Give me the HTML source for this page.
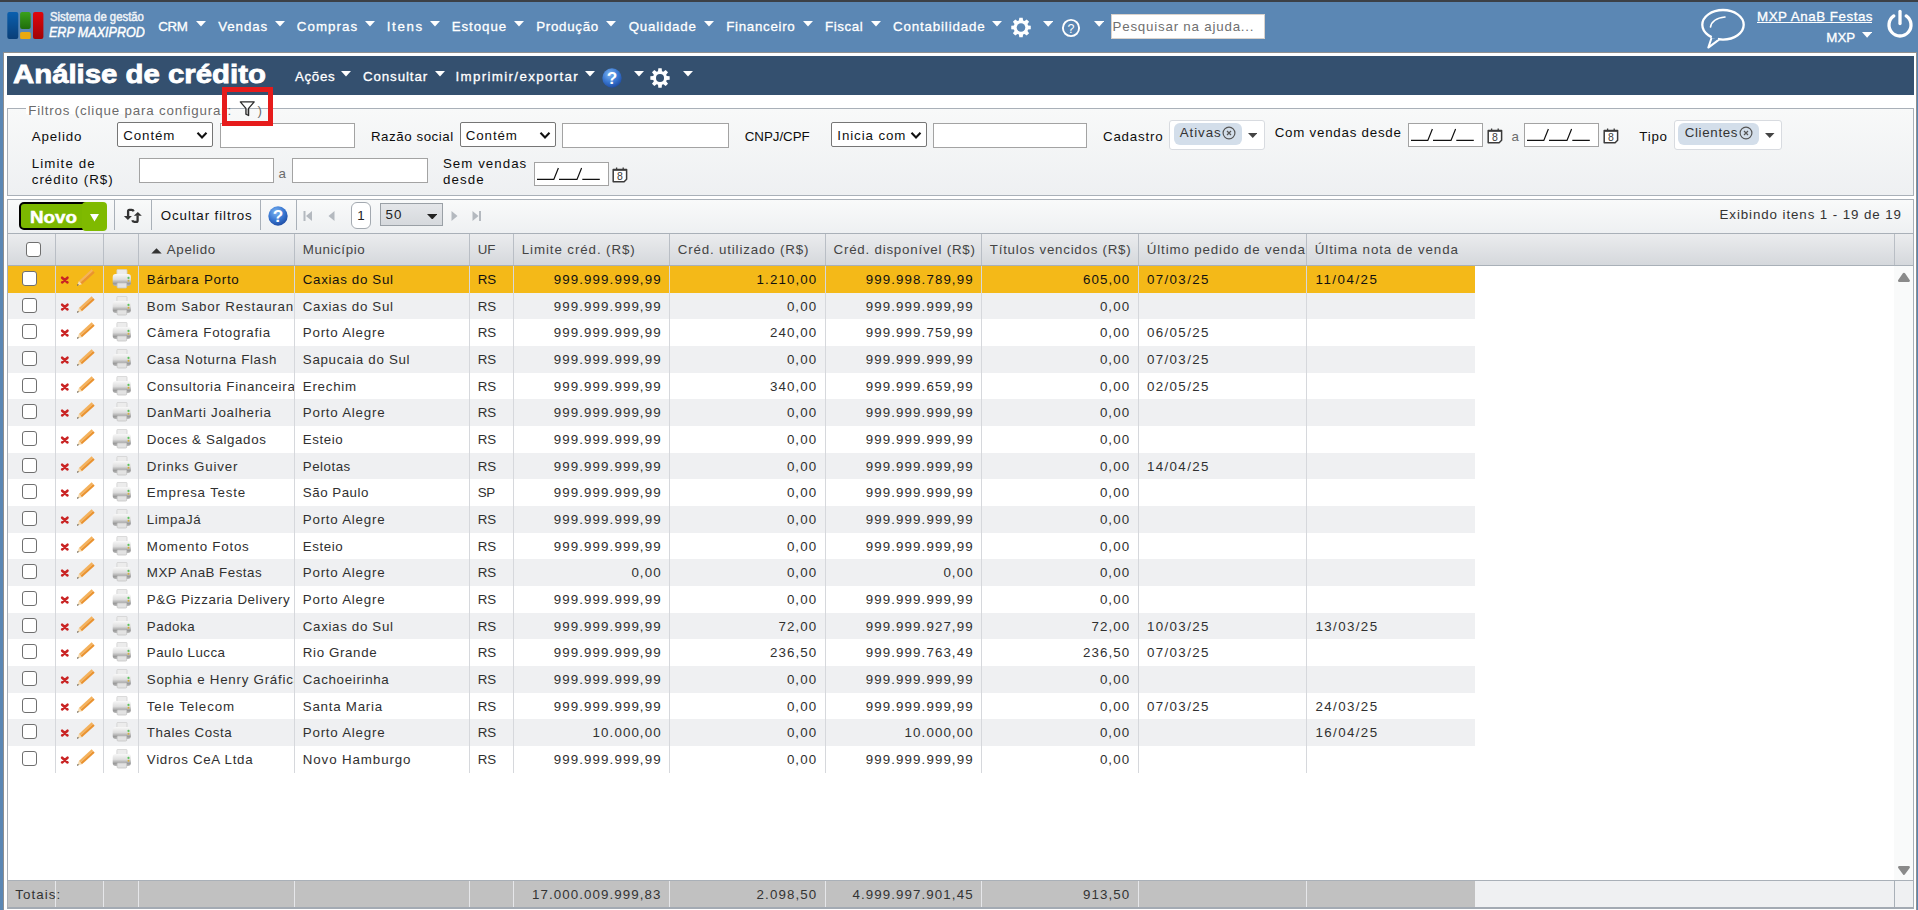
<!DOCTYPE html><html><head><meta charset="utf-8"><title>Análise de crédito</title><style>
html,body{margin:0;padding:0}
body{width:1918px;height:910px;overflow:hidden;position:relative;background:#5b87b4;font-family:"Liberation Sans",sans-serif;}
.t{position:absolute;white-space:nowrap;-webkit-text-stroke:0px currentColor}
.r{position:absolute;display:block}
</style></head><body>
<div class="r" style="left:0px;top:0px;width:1918px;height:2px;background:#3c4046"></div>
<svg class="r" style="left:7px;top:12px;" width="37" height="28" viewBox="0 0 37 28">
<defs>
<linearGradient id="gb" x1="0" y1="0" x2="0" y2="1"><stop offset="0" stop-color="#0a5fae"/><stop offset="1" stop-color="#0a3f78"/></linearGradient>
<linearGradient id="gg" x1="0" y1="0" x2="0" y2="1"><stop offset="0" stop-color="#3aa11a"/><stop offset="1" stop-color="#1f6d0c"/></linearGradient>
<linearGradient id="gr" x1="0" y1="0" x2="0" y2="1"><stop offset="0" stop-color="#e0060b"/><stop offset="1" stop-color="#a00307"/></linearGradient>
</defs>
<rect x="0.3" y="0" width="11" height="27" rx="2" fill="url(#gb)"/>
<rect x="13.1" y="0" width="10.6" height="17" rx="2" fill="url(#gg)"/>
<rect x="13.1" y="20" width="10.6" height="7" rx="1.5" fill="#eaa90f"/>
<rect x="26" y="0" width="10.4" height="27" rx="2" fill="url(#gr)"/>
</svg>
<div class="t " style="left:49.50px;top:10.84px;font-size:12.000px;line-height:12.000px;color:#eef2f7;letter-spacing:0.000px;-webkit-text-stroke:0.5px #eef2f7;transform:scaleX(0.9448);transform-origin:0 0;">Sistema de gestão</div>
<div class="t " style="left:48.50px;top:25.15px;font-size:14.000px;line-height:14.000px;color:#ffffff;letter-spacing:0.000px;font-style:italic;-webkit-text-stroke:0.45px #fff;transform:scaleX(0.8964);transform-origin:0 0;">ERP MAXIPROD</div>
<div class="t " style="left:158.20px;top:19.71px;font-size:13.333px;line-height:13.333px;color:#ffffff;letter-spacing:-0.399px;-webkit-text-stroke:0.3px #fff;">CRM</div>
<svg class="r" style="left:195.5px;top:21px;" width="10" height="5.5" viewBox="0 0 10 5.5"><polygon points="0,0 10,0 5.0,5.5" fill="#ffffff"/></svg>
<div class="t " style="left:218.20px;top:19.71px;font-size:13.333px;line-height:13.333px;color:#ffffff;letter-spacing:0.916px;-webkit-text-stroke:0.3px #fff;">Vendas</div>
<svg class="r" style="left:274.5px;top:21px;" width="10" height="5.5" viewBox="0 0 10 5.5"><polygon points="0,0 10,0 5.0,5.5" fill="#ffffff"/></svg>
<div class="t " style="left:296.70px;top:19.71px;font-size:13.333px;line-height:13.333px;color:#ffffff;letter-spacing:1.080px;-webkit-text-stroke:0.3px #fff;">Compras</div>
<svg class="r" style="left:364.5px;top:21px;" width="10" height="5.5" viewBox="0 0 10 5.5"><polygon points="0,0 10,0 5.0,5.5" fill="#ffffff"/></svg>
<div class="t " style="left:386.70px;top:19.71px;font-size:13.333px;line-height:13.333px;color:#ffffff;letter-spacing:1.665px;-webkit-text-stroke:0.3px #fff;">Itens</div>
<svg class="r" style="left:429.5px;top:21px;" width="10" height="5.5" viewBox="0 0 10 5.5"><polygon points="0,0 10,0 5.0,5.5" fill="#ffffff"/></svg>
<div class="t " style="left:451.70px;top:19.71px;font-size:13.333px;line-height:13.333px;color:#ffffff;letter-spacing:0.940px;-webkit-text-stroke:0.3px #fff;">Estoque</div>
<svg class="r" style="left:513.75px;top:21px;" width="10" height="5.5" viewBox="0 0 10 5.5"><polygon points="0,0 10,0 5.0,5.5" fill="#ffffff"/></svg>
<div class="t " style="left:536.20px;top:19.71px;font-size:13.333px;line-height:13.333px;color:#ffffff;letter-spacing:0.713px;-webkit-text-stroke:0.3px #fff;">Produção</div>
<svg class="r" style="left:606px;top:21px;" width="10" height="5.5" viewBox="0 0 10 5.5"><polygon points="0,0 10,0 5.0,5.5" fill="#ffffff"/></svg>
<div class="t " style="left:628.70px;top:19.71px;font-size:13.333px;line-height:13.333px;color:#ffffff;letter-spacing:0.816px;-webkit-text-stroke:0.3px #fff;">Qualidade</div>
<svg class="r" style="left:703.75px;top:21px;" width="10" height="5.5" viewBox="0 0 10 5.5"><polygon points="0,0 10,0 5.0,5.5" fill="#ffffff"/></svg>
<div class="t " style="left:726.20px;top:19.71px;font-size:13.333px;line-height:13.333px;color:#ffffff;letter-spacing:0.702px;-webkit-text-stroke:0.3px #fff;">Financeiro</div>
<svg class="r" style="left:802.5px;top:21px;" width="10" height="5.5" viewBox="0 0 10 5.5"><polygon points="0,0 10,0 5.0,5.5" fill="#ffffff"/></svg>
<div class="t " style="left:824.95px;top:19.71px;font-size:13.333px;line-height:13.333px;color:#ffffff;letter-spacing:0.600px;-webkit-text-stroke:0.3px #fff;">Fiscal</div>
<svg class="r" style="left:870.5px;top:21px;" width="10" height="5.5" viewBox="0 0 10 5.5"><polygon points="0,0 10,0 5.0,5.5" fill="#ffffff"/></svg>
<div class="t " style="left:892.95px;top:19.71px;font-size:13.333px;line-height:13.333px;color:#ffffff;letter-spacing:0.856px;-webkit-text-stroke:0.3px #fff;">Contabilidade</div>
<svg class="r" style="left:992px;top:21px;" width="10" height="5.5" viewBox="0 0 10 5.5"><polygon points="0,0 10,0 5.0,5.5" fill="#ffffff"/></svg>
<svg class="r" style="left:1010px;top:17px;" width="22" height="22" viewBox="0 0 22 22"><polygon points="8.92,3.40 9.32,0.74 12.68,0.74 13.08,3.40 14.55,4.01 16.71,2.41 19.09,4.79 17.49,6.95 18.10,8.42 20.76,8.82 20.76,12.18 18.10,12.58 17.49,14.05 19.09,16.21 16.71,18.59 14.55,16.99 13.08,17.60 12.68,20.26 9.32,20.26 8.92,17.60 7.45,16.99 5.29,18.59 2.91,16.21 4.51,14.05 3.90,12.58 1.24,12.18 1.24,8.82 3.90,8.42 4.51,6.95 2.91,4.79 5.29,2.41 7.45,4.01" fill="#ffffff"/><circle cx="11" cy="10.5" r="4.3" fill="#5b87b4"/></svg>
<svg class="r" style="left:1042.8px;top:21px;" width="10.4" height="5.7" viewBox="0 0 10.4 5.7"><polygon points="0,0 10.4,0 5.2,5.7" fill="#ffffff"/></svg>
<svg class="r" style="left:1061px;top:18px;" width="20" height="20" viewBox="0 0 20 20"><circle cx="10" cy="10" r="8.1" fill="none" stroke="#fff" stroke-width="1.9"/><text x="10" y="14.6" font-family="Liberation Sans" font-size="12.5" fill="#fff" text-anchor="middle">?</text></svg>
<svg class="r" style="left:1093.7px;top:21px;" width="10.3" height="5.7" viewBox="0 0 10.3 5.7"><polygon points="0,0 10.3,0 5.15,5.7" fill="#ffffff"/></svg>
<div class="r" style="left:1111px;top:14px;width:154px;height:25px;background:#fff;border:0;box-shadow:inset 0 0 0 1px #d9d2cc"></div>
<div class="t " style="left:1112.50px;top:19.71px;font-size:13.333px;line-height:13.333px;color:#6f6f6f;letter-spacing:0.790px;">Pesquisar na ajuda...</div>
<svg class="r" style="left:1698px;top:7px;" width="52" height="44" viewBox="0 0 52 44"><ellipse cx="25" cy="17.8" rx="20.7" ry="14.8" fill="none" stroke="#fff" stroke-width="2.3"/>
<path d="M13.5 31 L10.3 40.6 L21 32.6" fill="#5b87b4" stroke="#fff" stroke-width="2" stroke-linejoin="round"/>
<path d="M14 29.5 L20 31.5" stroke="#5b87b4" stroke-width="2.5"/>
<path d="M12.5 20 Q14 11.5 27 10" fill="none" stroke="#fff" stroke-width="1.6" stroke-linecap="round"/></svg>
<div class="t " style="left:1757.00px;top:9.91px;font-size:13.333px;line-height:13.333px;color:#ffffff;letter-spacing:0.544px;-webkit-text-stroke:0.3px #fff;">MXP AnaB Festas</div>
<div class="r" style="left:1757px;top:22px;width:115px;height:1px;background:#fff"></div>
<div class="t " style="left:1826.20px;top:30.71px;font-size:13.333px;line-height:13.333px;color:#ffffff;letter-spacing:0.087px;-webkit-text-stroke:0.3px #fff;">MXP</div>
<svg class="r" style="left:1861.8px;top:32.3px;" width="10.2" height="5.7" viewBox="0 0 10.2 5.7"><polygon points="0,0 10.2,0 5.1,5.7" fill="#ffffff"/></svg>
<svg class="r" style="left:1884px;top:8px;" width="32" height="32" viewBox="0 0 32 32"><path d="M9.8 7.9 A11 11 0 1 0 22.2 7.9" fill="none" stroke="#fff" stroke-width="3.3" stroke-linecap="round"/>
<line x1="16" y1="3.5" x2="16" y2="15.5" stroke="#fff" stroke-width="3.3" stroke-linecap="round"/></svg>
<div class="r" style="left:3px;top:52px;width:1912px;height:860px;background:#fff;border:1px solid #8f8f8f;border-bottom:0"></div>
<div class="r" style="left:7px;top:56px;width:1907px;height:39px;background:#34506f"></div>
<div class="t " style="left:12.50px;top:61.61px;font-size:25.500px;line-height:25.500px;color:#ffffff;letter-spacing:0.000px;font-weight:bold;-webkit-text-stroke:0.8px #fff;transform:scaleX(1.1511);transform-origin:0 0;">Análise de crédito</div>
<div class="t " style="left:294.95px;top:70.01px;font-size:13.333px;line-height:13.333px;color:#ffffff;letter-spacing:0.690px;-webkit-text-stroke:0.3px #fff;">Ações</div>
<svg class="r" style="left:341.25px;top:71.2px;" width="10" height="5.5" viewBox="0 0 10 5.5"><polygon points="0,0 10,0 5.0,5.5" fill="#ffffff"/></svg>
<div class="t " style="left:362.95px;top:70.01px;font-size:13.333px;line-height:13.333px;color:#ffffff;letter-spacing:0.907px;-webkit-text-stroke:0.3px #fff;">Consultar</div>
<svg class="r" style="left:434.5px;top:71.2px;" width="10" height="5.5" viewBox="0 0 10 5.5"><polygon points="0,0 10,0 5.0,5.5" fill="#ffffff"/></svg>
<div class="t " style="left:455.45px;top:70.01px;font-size:13.333px;line-height:13.333px;color:#ffffff;letter-spacing:1.348px;-webkit-text-stroke:0.3px #fff;">Imprimir/exportar</div>
<svg class="r" style="left:585px;top:71.2px;" width="10" height="5.5" viewBox="0 0 10 5.5"><polygon points="0,0 10,0 5.0,5.5" fill="#ffffff"/></svg>
<svg class="r" style="left:602px;top:68px;" width="20" height="20" viewBox="0 0 20 20"><defs><radialGradient id="bh602" cx="0.4" cy="0.3" r="0.75"><stop offset="0" stop-color="#7fb6f2"/><stop offset="0.55" stop-color="#3a78d2"/><stop offset="1" stop-color="#1c48a0"/></radialGradient></defs>
<circle cx="10.0" cy="10.0" r="9.7" fill="url(#bh602)"/>
<text x="10.0" y="15.8" font-family="Liberation Sans" font-weight="bold" font-size="17.2" fill="#fff" text-anchor="middle">?</text></svg>
<svg class="r" style="left:633.75px;top:71.2px;" width="10" height="5.5" viewBox="0 0 10 5.5"><polygon points="0,0 10,0 5.0,5.5" fill="#ffffff"/></svg>
<svg class="r" style="left:649px;top:67px;" width="22" height="22" viewBox="0 0 22 22"><polygon points="9.03,4.28 9.33,1.34 12.67,1.34 12.97,4.28 14.36,4.86 16.65,2.99 19.01,5.35 17.14,7.64 17.72,9.03 20.66,9.33 20.66,12.67 17.72,12.97 17.14,14.36 19.01,16.65 16.65,19.01 14.36,17.14 12.97,17.72 12.67,20.66 9.33,20.66 9.03,17.72 7.64,17.14 5.35,19.01 2.99,16.65 4.86,14.36 4.28,12.97 1.34,12.67 1.34,9.33 4.28,9.03 4.86,7.64 2.99,5.35 5.35,2.99 7.64,4.86" fill="#ffffff"/><circle cx="11" cy="11" r="4.0" fill="#34506f"/></svg>
<svg class="r" style="left:682.5px;top:71.2px;" width="10" height="5.5" viewBox="0 0 10 5.5"><polygon points="0,0 10,0 5.0,5.5" fill="#ffffff"/></svg>
<div class="r" style="left:7px;top:108px;width:1905px;height:86px;border:1px solid #a9b0b8;background:linear-gradient(#f8f9f9,#eef0f2)"></div>
<div class="r" style="left:26px;top:100px;width:200px;height:14px;background:#fff"></div>
<div class="t " style="left:28.20px;top:103.71px;font-size:13.333px;line-height:13.333px;color:#6b6b6b;letter-spacing:0.830px;">Filtros (clique para configurar</div>
<div class="t " style="left:227.50px;top:103.71px;font-size:13.333px;line-height:13.333px;color:#6b6b6b;letter-spacing:0.000px;">:</div>
<svg class="r" style="left:238px;top:100px;" width="18" height="17" viewBox="0 0 18 17"><path d="M2.3 1.9 H16.2 L10.6 8.4 V15.5 L7.9 14.2 V8.4 Z" fill="#fff"/><path d="M8.3 8.6 H10.3 V15 L8.3 14 Z" fill="#b8b8b8"/><path d="M2.3 1.9 H16.2 L10.6 8.4 V15.5 L7.9 14.2 V8.4 Z" fill="none" stroke="#2b2b2b" stroke-width="1.3" stroke-linejoin="round"/></svg>
<div class="t " style="left:257.40px;top:103.71px;font-size:13.333px;line-height:13.333px;color:#6b6b6b;letter-spacing:0.000px;">)</div>
<div class="t " style="left:31.70px;top:130.01px;font-size:13.333px;line-height:13.333px;color:#0d0d0d;letter-spacing:0.890px;">Apelido</div>
<div class="r" style="left:117px;top:122px;width:94px;height:23px;background:#fff;border:1px solid #767676;border-radius:2px"></div>
<div class="t " style="left:123.30px;top:129.11px;font-size:13.333px;line-height:13.333px;color:#111;letter-spacing:0.888px;">Contém</div>
<svg class="r" style="left:196px;top:130.6px;" width="12" height="9" viewBox="0 0 12 9"><path d="M1.5 1.8 L6 6.4 L10.5 1.8" fill="none" stroke="#111" stroke-width="2.1"/></svg>
<div class="r" style="left:220px;top:123px;width:133px;height:23px;background:#fff;border:1px solid #a3a3a3"></div>
<div class="t " style="left:370.95px;top:130.01px;font-size:13.333px;line-height:13.333px;color:#0d0d0d;letter-spacing:0.544px;">Razão social</div>
<div class="r" style="left:459.5px;top:122px;width:94px;height:23px;background:#fff;border:1px solid #767676;border-radius:2px"></div>
<div class="t " style="left:465.80px;top:129.11px;font-size:13.333px;line-height:13.333px;color:#111;letter-spacing:0.888px;">Contém</div>
<svg class="r" style="left:538.5px;top:130.6px;" width="12" height="9" viewBox="0 0 12 9"><path d="M1.5 1.8 L6 6.4 L10.5 1.8" fill="none" stroke="#111" stroke-width="2.1"/></svg>
<div class="r" style="left:562px;top:123px;width:165px;height:23px;background:#fff;border:1px solid #a3a3a3"></div>
<div class="t " style="left:744.70px;top:130.01px;font-size:13.333px;line-height:13.333px;color:#0d0d0d;letter-spacing:-0.017px;">CNPJ/CPF</div>
<div class="r" style="left:831px;top:122px;width:94px;height:23px;background:#fff;border:1px solid #767676;border-radius:2px"></div>
<div class="t " style="left:837.30px;top:129.11px;font-size:13.333px;line-height:13.333px;color:#111;letter-spacing:0.901px;">Inicia com</div>
<svg class="r" style="left:910px;top:130.6px;" width="12" height="9" viewBox="0 0 12 9"><path d="M1.5 1.8 L6 6.4 L10.5 1.8" fill="none" stroke="#111" stroke-width="2.1"/></svg>
<div class="r" style="left:932.5px;top:123px;width:152px;height:23px;background:#fff;border:1px solid #a3a3a3"></div>
<div class="t " style="left:1102.95px;top:130.01px;font-size:13.333px;line-height:13.333px;color:#0d0d0d;letter-spacing:0.817px;">Cadastro</div>
<div class="r" style="left:1168.75px;top:120px;width:94px;height:28px;background:#fff;border:1px solid #d8dbe0;border-radius:3px"></div>
<div class="r" style="left:1174px;top:123px;width:68px;height:22px;background:#d3deea;border-radius:6px"></div>
<div class="t " style="left:1179.80px;top:125.71px;font-size:13.333px;line-height:13.333px;color:#333;letter-spacing:0.912px;">Ativas</div>
<svg class="r" style="left:1222px;top:126px;" width="14" height="14" viewBox="0 0 14 14"><circle cx="7" cy="7" r="5.9" fill="none" stroke="#555" stroke-width="1.2"/><path d="M5 5 L9 9 M9 5 L5 9" stroke="#555" stroke-width="1.2"/></svg>
<svg class="r" style="left:1247.75px;top:133px;" width="9.5" height="5" viewBox="0 0 9.5 5"><polygon points="0,0 9.5,0 4.75,5" fill="#444"/></svg>
<div class="t " style="left:1274.70px;top:126.21px;font-size:13.333px;line-height:13.333px;color:#0d0d0d;letter-spacing:0.762px;">Com vendas desde</div>
<div class="r" style="left:1408px;top:123px;width:73px;height:22px;background:#fff;border:1px solid #a3a3a3"></div>
<svg class="r" style="left:1408px;top:123px;" width="70" height="22" viewBox="0 0 70 22"><path d="M3 17.4 H19.8 L24.4 6 M25 17.4 H43 L47.6 6 M48.3 17.4 H65.8" fill="none" stroke="#111" stroke-width="1.2"/></svg>
<svg class="r" style="left:1487px;top:128px;" width="16" height="16" viewBox="0 0 16 16"><path d="M1.2 2.6 H14.6 V12.3 L12.1 14.8 H1.2 Z" fill="#fff" stroke="#3b3b3b" stroke-width="1.5" stroke-linejoin="round"/>
<path d="M1.2 2.6 H14.6 V3.8 H1.2 Z" fill="#3b3b3b"/>
<path d="M4.6 0.4 V3 M11.2 0.4 V3" stroke="#3b3b3b" stroke-width="1.3"/>
<text x="7.9" y="13.2" font-family="Liberation Sans" font-size="10.5" fill="#3b3b3b" text-anchor="middle">8</text></svg>
<div class="t " style="left:1511.50px;top:130.01px;font-size:13.333px;line-height:13.333px;color:#6b6b6b;letter-spacing:0.000px;">a</div>
<div class="r" style="left:1524px;top:123px;width:73px;height:22px;background:#fff;border:1px solid #a3a3a3"></div>
<svg class="r" style="left:1524px;top:123px;" width="70" height="22" viewBox="0 0 70 22"><path d="M3 17.4 H19.8 L24.4 6 M25 17.4 H43 L47.6 6 M48.3 17.4 H65.8" fill="none" stroke="#111" stroke-width="1.2"/></svg>
<svg class="r" style="left:1603px;top:128px;" width="16" height="16" viewBox="0 0 16 16"><path d="M1.2 2.6 H14.6 V12.3 L12.1 14.8 H1.2 Z" fill="#fff" stroke="#3b3b3b" stroke-width="1.5" stroke-linejoin="round"/>
<path d="M1.2 2.6 H14.6 V3.8 H1.2 Z" fill="#3b3b3b"/>
<path d="M4.6 0.4 V3 M11.2 0.4 V3" stroke="#3b3b3b" stroke-width="1.3"/>
<text x="7.9" y="13.2" font-family="Liberation Sans" font-size="10.5" fill="#3b3b3b" text-anchor="middle">8</text></svg>
<div class="t " style="left:1639.20px;top:130.01px;font-size:13.333px;line-height:13.333px;color:#0d0d0d;letter-spacing:0.791px;">Tipo</div>
<div class="r" style="left:1674.25px;top:120px;width:106px;height:28px;background:#fff;border:1px solid #d8dbe0;border-radius:3px"></div>
<div class="r" style="left:1678px;top:123px;width:80.5px;height:22px;background:#d3deea;border-radius:6px"></div>
<div class="t " style="left:1684.70px;top:125.71px;font-size:13.333px;line-height:13.333px;color:#333;letter-spacing:0.664px;">Clientes</div>
<svg class="r" style="left:1738.9px;top:126px;" width="14" height="14" viewBox="0 0 14 14"><circle cx="7" cy="7" r="5.9" fill="none" stroke="#555" stroke-width="1.2"/><path d="M5 5 L9 9 M9 5 L5 9" stroke="#555" stroke-width="1.2"/></svg>
<svg class="r" style="left:1765.25px;top:133px;" width="9.5" height="5" viewBox="0 0 9.5 5"><polygon points="0,0 9.5,0 4.75,5" fill="#444"/></svg>
<div class="t " style="left:31.70px;top:156.91px;font-size:13.333px;line-height:13.333px;color:#0d0d0d;letter-spacing:1.121px;">Limite de</div>
<div class="t " style="left:31.70px;top:172.51px;font-size:13.333px;line-height:13.333px;color:#0d0d0d;letter-spacing:1.038px;">crédito (R$)</div>
<div class="r" style="left:139px;top:158px;width:133px;height:23px;background:#fff;border:1px solid #a3a3a3"></div>
<div class="t " style="left:278.50px;top:167.21px;font-size:13.333px;line-height:13.333px;color:#6b6b6b;letter-spacing:0.000px;">a</div>
<div class="r" style="left:292px;top:158px;width:134px;height:23px;background:#fff;border:1px solid #a3a3a3"></div>
<div class="t " style="left:442.95px;top:156.91px;font-size:13.333px;line-height:13.333px;color:#0d0d0d;letter-spacing:1.023px;">Sem vendas</div>
<div class="t " style="left:442.95px;top:172.51px;font-size:13.333px;line-height:13.333px;color:#0d0d0d;letter-spacing:1.122px;">desde</div>
<div class="r" style="left:534px;top:162px;width:73px;height:22px;background:#fff;border:1px solid #a3a3a3"></div>
<svg class="r" style="left:534px;top:162px;" width="70" height="22" viewBox="0 0 70 22"><path d="M3 17.4 H19.8 L24.4 6 M25 17.4 H43 L47.6 6 M48.3 17.4 H65.8" fill="none" stroke="#111" stroke-width="1.2"/></svg>
<svg class="r" style="left:612px;top:167px;" width="16" height="16" viewBox="0 0 16 16"><path d="M1.2 2.6 H14.6 V12.3 L12.1 14.8 H1.2 Z" fill="#fff" stroke="#3b3b3b" stroke-width="1.5" stroke-linejoin="round"/>
<path d="M1.2 2.6 H14.6 V3.8 H1.2 Z" fill="#3b3b3b"/>
<path d="M4.6 0.4 V3 M11.2 0.4 V3" stroke="#3b3b3b" stroke-width="1.3"/>
<text x="7.9" y="13.2" font-family="Liberation Sans" font-size="10.5" fill="#3b3b3b" text-anchor="middle">8</text></svg>
<div class="r" style="left:7px;top:199px;width:1905px;height:707px;border:1px solid #a9b0b8;border-bottom:2px solid #a3aab3;background:#fff"></div>
<div class="r" style="left:8px;top:200px;width:1905px;height:33px;background:linear-gradient(#f9fafa,#eef0f2);border-bottom:1px solid #a9b0b8"></div>
<div class="r" style="left:19px;top:202px;width:69px;height:24px;background:#7cb800;border:2px solid #000;border-radius:5px"></div>
<div class="r" style="left:82px;top:202px;width:25px;height:29px;background:#7fba00;border-radius:4px"></div>
<div class="t " style="left:29.80px;top:208.61px;font-size:17.000px;line-height:17.000px;color:#ffffff;letter-spacing:0.000px;font-weight:bold;-webkit-text-stroke:0.5px #fff;transform:scaleX(1.1060);transform-origin:0 0;">Novo</div>
<svg class="r" style="left:90px;top:214px;" width="9" height="7.5" viewBox="0 0 9 7.5"><polygon points="0,0 9,0 4.5,7.5" fill="#fff"/></svg>
<div class="r" style="left:114px;top:200px;width:1px;height:30px;background:#a9b0b8"></div>
<div class="r" style="left:151px;top:200px;width:1px;height:30px;background:#a9b0b8"></div>
<div class="r" style="left:260px;top:200px;width:1px;height:30px;background:#a9b0b8"></div>
<div class="r" style="left:296px;top:200px;width:1px;height:30px;background:#a9b0b8"></div>
<svg class="r" style="left:116px;top:202px;" width="30" height="24" viewBox="0 0 30 24"><path d="M17.6 9.4 Q17.2 7.9 15.6 7.9 H13.4 Q12.1 7.9 12.1 9.3 V14.5" fill="none" stroke="#333" stroke-width="2.3"/>
<polygon points="7.9,14.1 15.9,14.1 11.9,17.9" fill="#333"/>
<path d="M16.3 18.3 Q16.7 19.8 18.3 19.8 H20.3 Q21.6 19.8 21.6 18.4 V13.6" fill="none" stroke="#333" stroke-width="2.3"/>
<polygon points="17.8,13.8 25.8,13.8 21.8,10.1" fill="#333"/></svg>
<div class="t " style="left:160.75px;top:208.91px;font-size:13.333px;line-height:13.333px;color:#111;letter-spacing:0.895px;">Ocultar filtros</div>
<svg class="r" style="left:268px;top:206px;" width="20" height="20" viewBox="0 0 20 20"><defs><radialGradient id="bh268" cx="0.4" cy="0.3" r="0.75"><stop offset="0" stop-color="#7fb6f2"/><stop offset="0.55" stop-color="#3a78d2"/><stop offset="1" stop-color="#1c48a0"/></radialGradient></defs>
<circle cx="10.0" cy="10.0" r="9.7" fill="url(#bh268)"/>
<text x="10.0" y="15.8" font-family="Liberation Sans" font-weight="bold" font-size="17.2" fill="#fff" text-anchor="middle">?</text></svg>
<svg class="r" style="left:303px;top:211px;" width="10" height="10" viewBox="0 0 10 10"><rect x="0.5" y="0" width="2" height="10" fill="#b4b9bf"/><polygon points="9,0 9,10 3,5" fill="#b4b9bf"/></svg>
<svg class="r" style="left:327.5px;top:211px;" width="7" height="10" viewBox="0 0 7 10"><polygon points="6.5,0 6.5,10 0.5,5" fill="#b4b9bf"/></svg>
<div class="r" style="left:351px;top:202px;width:18px;height:25px;background:#fff;border:1px solid #a3a9b0;border-radius:6px"></div>
<div class="t " style="left:357.20px;top:208.91px;font-size:13.333px;line-height:13.333px;color:#222;letter-spacing:0.000px;">1</div>
<div class="r" style="left:380px;top:203px;width:61px;height:21px;background:linear-gradient(#e4e6e9,#d6d9dd);border:1px solid #9aa0a6"></div>
<div class="t " style="left:385.50px;top:208.01px;font-size:13.333px;line-height:13.333px;color:#222;letter-spacing:1.065px;">50</div>
<svg class="r" style="left:426.5px;top:213.5px;" width="10.5" height="5.5" viewBox="0 0 10.5 5.5"><polygon points="0,0 10.5,0 5.25,5.5" fill="#222"/></svg>
<svg class="r" style="left:450.5px;top:211px;" width="7" height="10" viewBox="0 0 7 10"><polygon points="0.5,0 0.5,10 6.5,5" fill="#b4b9bf"/></svg>
<svg class="r" style="left:471.5px;top:211px;" width="10" height="10" viewBox="0 0 10 10"><polygon points="0.5,0 0.5,10 6.5,5" fill="#b4b9bf"/><rect x="7" y="0" width="2" height="10" fill="#b4b9bf"/></svg>
<div class="t " style="left:1719.50px;top:208.01px;font-size:13.333px;line-height:13.333px;color:#333;letter-spacing:0.911px;">Exibindo itens 1 - 19 de 19</div>
<div class="r" style="left:8px;top:234px;width:1905px;height:31px;background:linear-gradient(#ebecee,#d5d8dc);border-bottom:1px solid #a9b0b8"></div>
<div class="r" style="left:55px;top:234px;width:1px;height:31px;background:#b9bec5"></div>
<div class="r" style="left:103px;top:234px;width:1px;height:31px;background:#b9bec5"></div>
<div class="r" style="left:138px;top:234px;width:1px;height:31px;background:#b9bec5"></div>
<div class="r" style="left:294px;top:234px;width:1px;height:31px;background:#b9bec5"></div>
<div class="r" style="left:469px;top:234px;width:1px;height:31px;background:#b9bec5"></div>
<div class="r" style="left:513px;top:234px;width:1px;height:31px;background:#b9bec5"></div>
<div class="r" style="left:669px;top:234px;width:1px;height:31px;background:#b9bec5"></div>
<div class="r" style="left:825px;top:234px;width:1px;height:31px;background:#b9bec5"></div>
<div class="r" style="left:981px;top:234px;width:1px;height:31px;background:#b9bec5"></div>
<div class="r" style="left:1138px;top:234px;width:1px;height:31px;background:#b9bec5"></div>
<div class="r" style="left:1306px;top:234px;width:1px;height:31px;background:#b9bec5"></div>
<div class="r" style="left:1894px;top:234px;width:1px;height:31px;background:#b9bec5"></div>
<div class="r" style="left:26px;top:242px;width:12.5px;height:12.5px;background:#fff;border:1.3px solid #6f6f6f;border-radius:3px"></div>
<svg class="r" style="left:151px;top:248px;" width="11" height="6" viewBox="0 0 11 6"><polygon points="0.3,5.6 10.7,5.6 5.5,0.2" fill="#333"/></svg>
<div class="t " style="left:166.80px;top:243.01px;font-size:13.333px;line-height:13.333px;color:#444;letter-spacing:0.657px;">Apelido</div>
<div class="t " style="left:302.80px;top:243.01px;font-size:13.333px;line-height:13.333px;color:#444;letter-spacing:0.596px;">Município</div>
<div class="t " style="left:477.80px;top:243.01px;font-size:13.333px;line-height:13.333px;color:#444;letter-spacing:-0.173px;">UF</div>
<div class="t " style="left:521.80px;top:243.01px;font-size:13.333px;line-height:13.333px;color:#444;letter-spacing:0.903px;">Limite créd. (R$)</div>
<div class="t " style="left:677.80px;top:243.01px;font-size:13.333px;line-height:13.333px;color:#444;letter-spacing:0.828px;">Créd. utilizado (R$)</div>
<div class="t " style="left:833.55px;top:243.01px;font-size:13.333px;line-height:13.333px;color:#444;letter-spacing:0.774px;">Créd. disponível (R$)</div>
<div class="t " style="left:989.80px;top:243.01px;font-size:13.333px;line-height:13.333px;color:#444;letter-spacing:0.750px;">Títulos vencidos (R$)</div>
<div class="t " style="left:1146.80px;top:243.01px;font-size:13.333px;line-height:13.333px;color:#444;letter-spacing:0.856px;">Último pedido de venda</div>
<div class="t " style="left:1314.80px;top:243.01px;font-size:13.333px;line-height:13.333px;color:#444;letter-spacing:0.902px;">Última nota de venda</div>
<!--HDR-->
<div class="r" style="left:1894px;top:266px;width:19px;height:614px;background:#f9fafa"></div>
<svg class="r" style="left:1896.5px;top:271.5px;" width="13.5" height="11" viewBox="0 0 13.5 11"><polygon points="6.95,2.0 11.6,8.7 2.3,8.7" fill="#8a8a8a" stroke="#8a8a8a" stroke-width="2.6" stroke-linejoin="round"/></svg>
<svg class="r" style="left:1896.5px;top:864.5px;" width="13.5" height="11" viewBox="0 0 13.5 11"><polygon points="2.3,2.2 11.6,2.2 6.95,8.6" fill="#8a8a8a" stroke="#8a8a8a" stroke-width="2.6" stroke-linejoin="round"/></svg>
<div class="r" style="left:8px;top:266px;width:1467px;height:27px;background:#f4b918"></div>
<div class="r" style="left:22px;top:271px;width:12.5px;height:12.5px;background:#fff;border:1.3px solid #6f6f6f;border-radius:3px"></div>
<svg class="r" style="left:60px;top:274.5px;" width="10" height="10" viewBox="0 0 10 10"><path d="M2.1 2.7 L7.5 7.5 M7.5 2.7 L2.1 7.5" stroke="#c92424" stroke-width="2.5" stroke-linecap="round"/></svg>
<svg class="r" style="left:75px;top:268px;" width="22" height="22" viewBox="0 0 22 22"><path d="M3.87 13.03 L16.64 1.32 L18.16 2.98 L5.39 14.69 Z" fill="#f4b25c"/>
<path d="M5.39 14.69 L18.16 2.98 L19.68 4.63 L6.91 16.35 Z" fill="#ea9330"/>
<path d="M3.87 13.03 L6.91 16.35 L2.00 17.80 Z" fill="#f6dcb2"/>
<path d="M2 17.8 L2.8 16.0 L3.9 17.1 Z" fill="#333"/></svg>
<svg class="r" style="left:112px;top:269px;" width="20" height="20" viewBox="0 0 20 20"><defs><linearGradient id="pg" x1="0" y1="0" x2="0" y2="1"><stop offset="0" stop-color="#f8f8f8"/><stop offset="0.45" stop-color="#dedede"/><stop offset="0.8" stop-color="#999"/><stop offset="1" stop-color="#b8b8b8"/></linearGradient></defs>
<rect x="4.9" y="0.4" width="10.1" height="6" rx="1" fill="#ececec" stroke="#cfcfcf" stroke-width="0.8"/>
<rect x="0.7" y="5" width="18.2" height="12" rx="3" fill="url(#pg)"/>
<rect x="5.1" y="14" width="9.6" height="5" rx="1" fill="#e2e2e2" stroke="#c4c4c4" stroke-width="0.8"/>
<circle cx="16.5" cy="8.9" r="1.1" fill="#5cc45c"/><circle cx="16.5" cy="11.8" r="1" fill="#d6b040"/></svg>
<div class="r" style="left:139px;top:266px;width:155px;height:27px;overflow:hidden">
<div class="t " style="left:7.80px;top:7.21px;font-size:13.333px;line-height:13.333px;color:#111;letter-spacing:0.749px;">Bárbara Porto</div>
</div>
<div class="t " style="left:302.80px;top:273.21px;font-size:13.333px;line-height:13.333px;color:#111;letter-spacing:0.658px;">Caxias do Sul</div>
<div class="t " style="left:477.80px;top:273.21px;font-size:13.333px;line-height:13.333px;color:#111;letter-spacing:-0.068px;">RS</div>
<div class="t " style="left:553.85px;top:273.21px;font-size:13.333px;line-height:13.333px;color:#111;letter-spacing:1.083px;">999.999.999,99</div>
<div class="t " style="left:756.60px;top:273.21px;font-size:13.333px;line-height:13.333px;color:#111;letter-spacing:1.086px;">1.210,00</div>
<div class="t " style="left:865.85px;top:273.21px;font-size:13.333px;line-height:13.333px;color:#111;letter-spacing:1.083px;">999.998.789,99</div>
<div class="t " style="left:1082.93px;top:273.21px;font-size:13.333px;line-height:13.333px;color:#111;letter-spacing:1.079px;">605,00</div>
<div class="t " style="left:1146.90px;top:273.21px;font-size:13.333px;line-height:13.333px;color:#111;letter-spacing:1.386px;">07/03/25</div>
<div class="t " style="left:1315.50px;top:273.21px;font-size:13.333px;line-height:13.333px;color:#111;letter-spacing:1.509px;">11/04/25</div>
<div class="r" style="left:8px;top:293px;width:1467px;height:26px;background:#eff0f2"></div>
<div class="r" style="left:22px;top:298px;width:12.5px;height:12.5px;background:#fff;border:1.3px solid #6f6f6f;border-radius:3px"></div>
<svg class="r" style="left:60px;top:301.5px;" width="10" height="10" viewBox="0 0 10 10"><path d="M2.1 2.7 L7.5 7.5 M7.5 2.7 L2.1 7.5" stroke="#c92424" stroke-width="2.5" stroke-linecap="round"/></svg>
<svg class="r" style="left:75px;top:295px;" width="22" height="22" viewBox="0 0 22 22"><path d="M3.87 13.03 L16.64 1.32 L18.16 2.98 L5.39 14.69 Z" fill="#f4b25c"/>
<path d="M5.39 14.69 L18.16 2.98 L19.68 4.63 L6.91 16.35 Z" fill="#ea9330"/>
<path d="M3.87 13.03 L6.91 16.35 L2.00 17.80 Z" fill="#f6dcb2"/>
<path d="M2 17.8 L2.8 16.0 L3.9 17.1 Z" fill="#333"/></svg>
<svg class="r" style="left:112px;top:296px;" width="20" height="20" viewBox="0 0 20 20"><defs><linearGradient id="pg" x1="0" y1="0" x2="0" y2="1"><stop offset="0" stop-color="#f8f8f8"/><stop offset="0.45" stop-color="#dedede"/><stop offset="0.8" stop-color="#999"/><stop offset="1" stop-color="#b8b8b8"/></linearGradient></defs>
<rect x="4.9" y="0.4" width="10.1" height="6" rx="1" fill="#ececec" stroke="#cfcfcf" stroke-width="0.8"/>
<rect x="0.7" y="5" width="18.2" height="12" rx="3" fill="url(#pg)"/>
<rect x="5.1" y="14" width="9.6" height="5" rx="1" fill="#e2e2e2" stroke="#c4c4c4" stroke-width="0.8"/>
<circle cx="16.5" cy="8.9" r="1.1" fill="#5cc45c"/><circle cx="16.5" cy="11.8" r="1" fill="#d6b040"/></svg>
<div class="r" style="left:139px;top:293px;width:155px;height:26px;overflow:hidden">
<div class="t " style="left:7.80px;top:7.21px;font-size:13.333px;line-height:13.333px;color:#303030;letter-spacing:0.809px;">Bom Sabor Restaurante</div>
</div>
<div class="t " style="left:302.80px;top:300.21px;font-size:13.333px;line-height:13.333px;color:#303030;letter-spacing:0.658px;">Caxias do Sul</div>
<div class="t " style="left:477.80px;top:300.21px;font-size:13.333px;line-height:13.333px;color:#303030;letter-spacing:-0.068px;">RS</div>
<div class="t " style="left:553.85px;top:300.21px;font-size:13.333px;line-height:13.333px;color:#303030;letter-spacing:1.083px;">999.999.999,99</div>
<div class="t " style="left:786.89px;top:300.21px;font-size:13.333px;line-height:13.333px;color:#303030;letter-spacing:1.086px;">0,00</div>
<div class="t " style="left:865.85px;top:300.21px;font-size:13.333px;line-height:13.333px;color:#303030;letter-spacing:1.083px;">999.999.999,99</div>
<div class="t " style="left:1099.89px;top:300.21px;font-size:13.333px;line-height:13.333px;color:#303030;letter-spacing:1.086px;">0,00</div>
<div class="r" style="left:8px;top:319px;width:1467px;height:27px;background:#ffffff"></div>
<div class="r" style="left:22px;top:324px;width:12.5px;height:12.5px;background:#fff;border:1.3px solid #6f6f6f;border-radius:3px"></div>
<svg class="r" style="left:60px;top:327.5px;" width="10" height="10" viewBox="0 0 10 10"><path d="M2.1 2.7 L7.5 7.5 M7.5 2.7 L2.1 7.5" stroke="#c92424" stroke-width="2.5" stroke-linecap="round"/></svg>
<svg class="r" style="left:75px;top:321px;" width="22" height="22" viewBox="0 0 22 22"><path d="M3.87 13.03 L16.64 1.32 L18.16 2.98 L5.39 14.69 Z" fill="#f4b25c"/>
<path d="M5.39 14.69 L18.16 2.98 L19.68 4.63 L6.91 16.35 Z" fill="#ea9330"/>
<path d="M3.87 13.03 L6.91 16.35 L2.00 17.80 Z" fill="#f6dcb2"/>
<path d="M2 17.8 L2.8 16.0 L3.9 17.1 Z" fill="#333"/></svg>
<svg class="r" style="left:112px;top:322px;" width="20" height="20" viewBox="0 0 20 20"><defs><linearGradient id="pg" x1="0" y1="0" x2="0" y2="1"><stop offset="0" stop-color="#f8f8f8"/><stop offset="0.45" stop-color="#dedede"/><stop offset="0.8" stop-color="#999"/><stop offset="1" stop-color="#b8b8b8"/></linearGradient></defs>
<rect x="4.9" y="0.4" width="10.1" height="6" rx="1" fill="#ececec" stroke="#cfcfcf" stroke-width="0.8"/>
<rect x="0.7" y="5" width="18.2" height="12" rx="3" fill="url(#pg)"/>
<rect x="5.1" y="14" width="9.6" height="5" rx="1" fill="#e2e2e2" stroke="#c4c4c4" stroke-width="0.8"/>
<circle cx="16.5" cy="8.9" r="1.1" fill="#5cc45c"/><circle cx="16.5" cy="11.8" r="1" fill="#d6b040"/></svg>
<div class="r" style="left:139px;top:319px;width:155px;height:27px;overflow:hidden">
<div class="t " style="left:7.80px;top:7.21px;font-size:13.333px;line-height:13.333px;color:#303030;letter-spacing:0.762px;">Câmera Fotografia</div>
</div>
<div class="t " style="left:302.80px;top:326.21px;font-size:13.333px;line-height:13.333px;color:#303030;letter-spacing:0.763px;">Porto Alegre</div>
<div class="t " style="left:477.80px;top:326.21px;font-size:13.333px;line-height:13.333px;color:#303030;letter-spacing:-0.068px;">RS</div>
<div class="t " style="left:553.85px;top:326.21px;font-size:13.333px;line-height:13.333px;color:#303030;letter-spacing:1.083px;">999.999.999,99</div>
<div class="t " style="left:769.93px;top:326.21px;font-size:13.333px;line-height:13.333px;color:#303030;letter-spacing:1.079px;">240,00</div>
<div class="t " style="left:865.85px;top:326.21px;font-size:13.333px;line-height:13.333px;color:#303030;letter-spacing:1.083px;">999.999.759,99</div>
<div class="t " style="left:1099.89px;top:326.21px;font-size:13.333px;line-height:13.333px;color:#303030;letter-spacing:1.086px;">0,00</div>
<div class="t " style="left:1146.90px;top:326.21px;font-size:13.333px;line-height:13.333px;color:#303030;letter-spacing:1.386px;">06/05/25</div>
<div class="r" style="left:8px;top:346px;width:1467px;height:27px;background:#eff0f2"></div>
<div class="r" style="left:22px;top:351px;width:12.5px;height:12.5px;background:#fff;border:1.3px solid #6f6f6f;border-radius:3px"></div>
<svg class="r" style="left:60px;top:354.5px;" width="10" height="10" viewBox="0 0 10 10"><path d="M2.1 2.7 L7.5 7.5 M7.5 2.7 L2.1 7.5" stroke="#c92424" stroke-width="2.5" stroke-linecap="round"/></svg>
<svg class="r" style="left:75px;top:348px;" width="22" height="22" viewBox="0 0 22 22"><path d="M3.87 13.03 L16.64 1.32 L18.16 2.98 L5.39 14.69 Z" fill="#f4b25c"/>
<path d="M5.39 14.69 L18.16 2.98 L19.68 4.63 L6.91 16.35 Z" fill="#ea9330"/>
<path d="M3.87 13.03 L6.91 16.35 L2.00 17.80 Z" fill="#f6dcb2"/>
<path d="M2 17.8 L2.8 16.0 L3.9 17.1 Z" fill="#333"/></svg>
<svg class="r" style="left:112px;top:349px;" width="20" height="20" viewBox="0 0 20 20"><defs><linearGradient id="pg" x1="0" y1="0" x2="0" y2="1"><stop offset="0" stop-color="#f8f8f8"/><stop offset="0.45" stop-color="#dedede"/><stop offset="0.8" stop-color="#999"/><stop offset="1" stop-color="#b8b8b8"/></linearGradient></defs>
<rect x="4.9" y="0.4" width="10.1" height="6" rx="1" fill="#ececec" stroke="#cfcfcf" stroke-width="0.8"/>
<rect x="0.7" y="5" width="18.2" height="12" rx="3" fill="url(#pg)"/>
<rect x="5.1" y="14" width="9.6" height="5" rx="1" fill="#e2e2e2" stroke="#c4c4c4" stroke-width="0.8"/>
<circle cx="16.5" cy="8.9" r="1.1" fill="#5cc45c"/><circle cx="16.5" cy="11.8" r="1" fill="#d6b040"/></svg>
<div class="r" style="left:139px;top:346px;width:155px;height:27px;overflow:hidden">
<div class="t " style="left:7.80px;top:7.21px;font-size:13.333px;line-height:13.333px;color:#303030;letter-spacing:0.651px;">Casa Noturna Flash</div>
</div>
<div class="t " style="left:302.80px;top:353.21px;font-size:13.333px;line-height:13.333px;color:#303030;letter-spacing:0.693px;">Sapucaia do Sul</div>
<div class="t " style="left:477.80px;top:353.21px;font-size:13.333px;line-height:13.333px;color:#303030;letter-spacing:-0.068px;">RS</div>
<div class="t " style="left:553.85px;top:353.21px;font-size:13.333px;line-height:13.333px;color:#303030;letter-spacing:1.083px;">999.999.999,99</div>
<div class="t " style="left:786.89px;top:353.21px;font-size:13.333px;line-height:13.333px;color:#303030;letter-spacing:1.086px;">0,00</div>
<div class="t " style="left:865.85px;top:353.21px;font-size:13.333px;line-height:13.333px;color:#303030;letter-spacing:1.083px;">999.999.999,99</div>
<div class="t " style="left:1099.89px;top:353.21px;font-size:13.333px;line-height:13.333px;color:#303030;letter-spacing:1.086px;">0,00</div>
<div class="t " style="left:1146.90px;top:353.21px;font-size:13.333px;line-height:13.333px;color:#303030;letter-spacing:1.386px;">07/03/25</div>
<div class="r" style="left:8px;top:373px;width:1467px;height:26px;background:#ffffff"></div>
<div class="r" style="left:22px;top:378px;width:12.5px;height:12.5px;background:#fff;border:1.3px solid #6f6f6f;border-radius:3px"></div>
<svg class="r" style="left:60px;top:381.5px;" width="10" height="10" viewBox="0 0 10 10"><path d="M2.1 2.7 L7.5 7.5 M7.5 2.7 L2.1 7.5" stroke="#c92424" stroke-width="2.5" stroke-linecap="round"/></svg>
<svg class="r" style="left:75px;top:375px;" width="22" height="22" viewBox="0 0 22 22"><path d="M3.87 13.03 L16.64 1.32 L18.16 2.98 L5.39 14.69 Z" fill="#f4b25c"/>
<path d="M5.39 14.69 L18.16 2.98 L19.68 4.63 L6.91 16.35 Z" fill="#ea9330"/>
<path d="M3.87 13.03 L6.91 16.35 L2.00 17.80 Z" fill="#f6dcb2"/>
<path d="M2 17.8 L2.8 16.0 L3.9 17.1 Z" fill="#333"/></svg>
<svg class="r" style="left:112px;top:376px;" width="20" height="20" viewBox="0 0 20 20"><defs><linearGradient id="pg" x1="0" y1="0" x2="0" y2="1"><stop offset="0" stop-color="#f8f8f8"/><stop offset="0.45" stop-color="#dedede"/><stop offset="0.8" stop-color="#999"/><stop offset="1" stop-color="#b8b8b8"/></linearGradient></defs>
<rect x="4.9" y="0.4" width="10.1" height="6" rx="1" fill="#ececec" stroke="#cfcfcf" stroke-width="0.8"/>
<rect x="0.7" y="5" width="18.2" height="12" rx="3" fill="url(#pg)"/>
<rect x="5.1" y="14" width="9.6" height="5" rx="1" fill="#e2e2e2" stroke="#c4c4c4" stroke-width="0.8"/>
<circle cx="16.5" cy="8.9" r="1.1" fill="#5cc45c"/><circle cx="16.5" cy="11.8" r="1" fill="#d6b040"/></svg>
<div class="r" style="left:139px;top:373px;width:155px;height:26px;overflow:hidden">
<div class="t " style="left:7.80px;top:7.21px;font-size:13.333px;line-height:13.333px;color:#303030;letter-spacing:0.698px;">Consultoria Financeira</div>
</div>
<div class="t " style="left:302.80px;top:380.21px;font-size:13.333px;line-height:13.333px;color:#303030;letter-spacing:0.740px;">Erechim</div>
<div class="t " style="left:477.80px;top:380.21px;font-size:13.333px;line-height:13.333px;color:#303030;letter-spacing:-0.068px;">RS</div>
<div class="t " style="left:553.85px;top:380.21px;font-size:13.333px;line-height:13.333px;color:#303030;letter-spacing:1.083px;">999.999.999,99</div>
<div class="t " style="left:769.93px;top:380.21px;font-size:13.333px;line-height:13.333px;color:#303030;letter-spacing:1.079px;">340,00</div>
<div class="t " style="left:865.85px;top:380.21px;font-size:13.333px;line-height:13.333px;color:#303030;letter-spacing:1.083px;">999.999.659,99</div>
<div class="t " style="left:1099.89px;top:380.21px;font-size:13.333px;line-height:13.333px;color:#303030;letter-spacing:1.086px;">0,00</div>
<div class="t " style="left:1146.90px;top:380.21px;font-size:13.333px;line-height:13.333px;color:#303030;letter-spacing:1.386px;">02/05/25</div>
<div class="r" style="left:8px;top:399px;width:1467px;height:27px;background:#eff0f2"></div>
<div class="r" style="left:22px;top:404px;width:12.5px;height:12.5px;background:#fff;border:1.3px solid #6f6f6f;border-radius:3px"></div>
<svg class="r" style="left:60px;top:407.5px;" width="10" height="10" viewBox="0 0 10 10"><path d="M2.1 2.7 L7.5 7.5 M7.5 2.7 L2.1 7.5" stroke="#c92424" stroke-width="2.5" stroke-linecap="round"/></svg>
<svg class="r" style="left:75px;top:401px;" width="22" height="22" viewBox="0 0 22 22"><path d="M3.87 13.03 L16.64 1.32 L18.16 2.98 L5.39 14.69 Z" fill="#f4b25c"/>
<path d="M5.39 14.69 L18.16 2.98 L19.68 4.63 L6.91 16.35 Z" fill="#ea9330"/>
<path d="M3.87 13.03 L6.91 16.35 L2.00 17.80 Z" fill="#f6dcb2"/>
<path d="M2 17.8 L2.8 16.0 L3.9 17.1 Z" fill="#333"/></svg>
<svg class="r" style="left:112px;top:402px;" width="20" height="20" viewBox="0 0 20 20"><defs><linearGradient id="pg" x1="0" y1="0" x2="0" y2="1"><stop offset="0" stop-color="#f8f8f8"/><stop offset="0.45" stop-color="#dedede"/><stop offset="0.8" stop-color="#999"/><stop offset="1" stop-color="#b8b8b8"/></linearGradient></defs>
<rect x="4.9" y="0.4" width="10.1" height="6" rx="1" fill="#ececec" stroke="#cfcfcf" stroke-width="0.8"/>
<rect x="0.7" y="5" width="18.2" height="12" rx="3" fill="url(#pg)"/>
<rect x="5.1" y="14" width="9.6" height="5" rx="1" fill="#e2e2e2" stroke="#c4c4c4" stroke-width="0.8"/>
<circle cx="16.5" cy="8.9" r="1.1" fill="#5cc45c"/><circle cx="16.5" cy="11.8" r="1" fill="#d6b040"/></svg>
<div class="r" style="left:139px;top:399px;width:155px;height:27px;overflow:hidden">
<div class="t " style="left:7.80px;top:7.21px;font-size:13.333px;line-height:13.333px;color:#303030;letter-spacing:0.720px;">DanMarti Joalheria</div>
</div>
<div class="t " style="left:302.80px;top:406.21px;font-size:13.333px;line-height:13.333px;color:#303030;letter-spacing:0.763px;">Porto Alegre</div>
<div class="t " style="left:477.80px;top:406.21px;font-size:13.333px;line-height:13.333px;color:#303030;letter-spacing:-0.068px;">RS</div>
<div class="t " style="left:553.85px;top:406.21px;font-size:13.333px;line-height:13.333px;color:#303030;letter-spacing:1.083px;">999.999.999,99</div>
<div class="t " style="left:786.89px;top:406.21px;font-size:13.333px;line-height:13.333px;color:#303030;letter-spacing:1.086px;">0,00</div>
<div class="t " style="left:865.85px;top:406.21px;font-size:13.333px;line-height:13.333px;color:#303030;letter-spacing:1.083px;">999.999.999,99</div>
<div class="t " style="left:1099.89px;top:406.21px;font-size:13.333px;line-height:13.333px;color:#303030;letter-spacing:1.086px;">0,00</div>
<div class="r" style="left:8px;top:426px;width:1467px;height:27px;background:#ffffff"></div>
<div class="r" style="left:22px;top:431px;width:12.5px;height:12.5px;background:#fff;border:1.3px solid #6f6f6f;border-radius:3px"></div>
<svg class="r" style="left:60px;top:434.5px;" width="10" height="10" viewBox="0 0 10 10"><path d="M2.1 2.7 L7.5 7.5 M7.5 2.7 L2.1 7.5" stroke="#c92424" stroke-width="2.5" stroke-linecap="round"/></svg>
<svg class="r" style="left:75px;top:428px;" width="22" height="22" viewBox="0 0 22 22"><path d="M3.87 13.03 L16.64 1.32 L18.16 2.98 L5.39 14.69 Z" fill="#f4b25c"/>
<path d="M5.39 14.69 L18.16 2.98 L19.68 4.63 L6.91 16.35 Z" fill="#ea9330"/>
<path d="M3.87 13.03 L6.91 16.35 L2.00 17.80 Z" fill="#f6dcb2"/>
<path d="M2 17.8 L2.8 16.0 L3.9 17.1 Z" fill="#333"/></svg>
<svg class="r" style="left:112px;top:429px;" width="20" height="20" viewBox="0 0 20 20"><defs><linearGradient id="pg" x1="0" y1="0" x2="0" y2="1"><stop offset="0" stop-color="#f8f8f8"/><stop offset="0.45" stop-color="#dedede"/><stop offset="0.8" stop-color="#999"/><stop offset="1" stop-color="#b8b8b8"/></linearGradient></defs>
<rect x="4.9" y="0.4" width="10.1" height="6" rx="1" fill="#ececec" stroke="#cfcfcf" stroke-width="0.8"/>
<rect x="0.7" y="5" width="18.2" height="12" rx="3" fill="url(#pg)"/>
<rect x="5.1" y="14" width="9.6" height="5" rx="1" fill="#e2e2e2" stroke="#c4c4c4" stroke-width="0.8"/>
<circle cx="16.5" cy="8.9" r="1.1" fill="#5cc45c"/><circle cx="16.5" cy="11.8" r="1" fill="#d6b040"/></svg>
<div class="r" style="left:139px;top:426px;width:155px;height:27px;overflow:hidden">
<div class="t " style="left:7.80px;top:7.21px;font-size:13.333px;line-height:13.333px;color:#303030;letter-spacing:0.628px;">Doces &amp; Salgados</div>
</div>
<div class="t " style="left:302.80px;top:433.21px;font-size:13.333px;line-height:13.333px;color:#303030;letter-spacing:0.544px;">Esteio</div>
<div class="t " style="left:477.80px;top:433.21px;font-size:13.333px;line-height:13.333px;color:#303030;letter-spacing:-0.068px;">RS</div>
<div class="t " style="left:553.85px;top:433.21px;font-size:13.333px;line-height:13.333px;color:#303030;letter-spacing:1.083px;">999.999.999,99</div>
<div class="t " style="left:786.89px;top:433.21px;font-size:13.333px;line-height:13.333px;color:#303030;letter-spacing:1.086px;">0,00</div>
<div class="t " style="left:865.85px;top:433.21px;font-size:13.333px;line-height:13.333px;color:#303030;letter-spacing:1.083px;">999.999.999,99</div>
<div class="t " style="left:1099.89px;top:433.21px;font-size:13.333px;line-height:13.333px;color:#303030;letter-spacing:1.086px;">0,00</div>
<div class="r" style="left:8px;top:453px;width:1467px;height:26px;background:#eff0f2"></div>
<div class="r" style="left:22px;top:458px;width:12.5px;height:12.5px;background:#fff;border:1.3px solid #6f6f6f;border-radius:3px"></div>
<svg class="r" style="left:60px;top:461.5px;" width="10" height="10" viewBox="0 0 10 10"><path d="M2.1 2.7 L7.5 7.5 M7.5 2.7 L2.1 7.5" stroke="#c92424" stroke-width="2.5" stroke-linecap="round"/></svg>
<svg class="r" style="left:75px;top:455px;" width="22" height="22" viewBox="0 0 22 22"><path d="M3.87 13.03 L16.64 1.32 L18.16 2.98 L5.39 14.69 Z" fill="#f4b25c"/>
<path d="M5.39 14.69 L18.16 2.98 L19.68 4.63 L6.91 16.35 Z" fill="#ea9330"/>
<path d="M3.87 13.03 L6.91 16.35 L2.00 17.80 Z" fill="#f6dcb2"/>
<path d="M2 17.8 L2.8 16.0 L3.9 17.1 Z" fill="#333"/></svg>
<svg class="r" style="left:112px;top:456px;" width="20" height="20" viewBox="0 0 20 20"><defs><linearGradient id="pg" x1="0" y1="0" x2="0" y2="1"><stop offset="0" stop-color="#f8f8f8"/><stop offset="0.45" stop-color="#dedede"/><stop offset="0.8" stop-color="#999"/><stop offset="1" stop-color="#b8b8b8"/></linearGradient></defs>
<rect x="4.9" y="0.4" width="10.1" height="6" rx="1" fill="#ececec" stroke="#cfcfcf" stroke-width="0.8"/>
<rect x="0.7" y="5" width="18.2" height="12" rx="3" fill="url(#pg)"/>
<rect x="5.1" y="14" width="9.6" height="5" rx="1" fill="#e2e2e2" stroke="#c4c4c4" stroke-width="0.8"/>
<circle cx="16.5" cy="8.9" r="1.1" fill="#5cc45c"/><circle cx="16.5" cy="11.8" r="1" fill="#d6b040"/></svg>
<div class="r" style="left:139px;top:453px;width:155px;height:26px;overflow:hidden">
<div class="t " style="left:7.80px;top:7.21px;font-size:13.333px;line-height:13.333px;color:#303030;letter-spacing:0.831px;">Drinks Guiver</div>
</div>
<div class="t " style="left:302.80px;top:460.21px;font-size:13.333px;line-height:13.333px;color:#303030;letter-spacing:0.496px;">Pelotas</div>
<div class="t " style="left:477.80px;top:460.21px;font-size:13.333px;line-height:13.333px;color:#303030;letter-spacing:-0.068px;">RS</div>
<div class="t " style="left:553.85px;top:460.21px;font-size:13.333px;line-height:13.333px;color:#303030;letter-spacing:1.083px;">999.999.999,99</div>
<div class="t " style="left:786.89px;top:460.21px;font-size:13.333px;line-height:13.333px;color:#303030;letter-spacing:1.086px;">0,00</div>
<div class="t " style="left:865.85px;top:460.21px;font-size:13.333px;line-height:13.333px;color:#303030;letter-spacing:1.083px;">999.999.999,99</div>
<div class="t " style="left:1099.89px;top:460.21px;font-size:13.333px;line-height:13.333px;color:#303030;letter-spacing:1.086px;">0,00</div>
<div class="t " style="left:1146.90px;top:460.21px;font-size:13.333px;line-height:13.333px;color:#303030;letter-spacing:1.386px;">14/04/25</div>
<div class="r" style="left:8px;top:479px;width:1467px;height:27px;background:#ffffff"></div>
<div class="r" style="left:22px;top:484px;width:12.5px;height:12.5px;background:#fff;border:1.3px solid #6f6f6f;border-radius:3px"></div>
<svg class="r" style="left:60px;top:487.5px;" width="10" height="10" viewBox="0 0 10 10"><path d="M2.1 2.7 L7.5 7.5 M7.5 2.7 L2.1 7.5" stroke="#c92424" stroke-width="2.5" stroke-linecap="round"/></svg>
<svg class="r" style="left:75px;top:481px;" width="22" height="22" viewBox="0 0 22 22"><path d="M3.87 13.03 L16.64 1.32 L18.16 2.98 L5.39 14.69 Z" fill="#f4b25c"/>
<path d="M5.39 14.69 L18.16 2.98 L19.68 4.63 L6.91 16.35 Z" fill="#ea9330"/>
<path d="M3.87 13.03 L6.91 16.35 L2.00 17.80 Z" fill="#f6dcb2"/>
<path d="M2 17.8 L2.8 16.0 L3.9 17.1 Z" fill="#333"/></svg>
<svg class="r" style="left:112px;top:482px;" width="20" height="20" viewBox="0 0 20 20"><defs><linearGradient id="pg" x1="0" y1="0" x2="0" y2="1"><stop offset="0" stop-color="#f8f8f8"/><stop offset="0.45" stop-color="#dedede"/><stop offset="0.8" stop-color="#999"/><stop offset="1" stop-color="#b8b8b8"/></linearGradient></defs>
<rect x="4.9" y="0.4" width="10.1" height="6" rx="1" fill="#ececec" stroke="#cfcfcf" stroke-width="0.8"/>
<rect x="0.7" y="5" width="18.2" height="12" rx="3" fill="url(#pg)"/>
<rect x="5.1" y="14" width="9.6" height="5" rx="1" fill="#e2e2e2" stroke="#c4c4c4" stroke-width="0.8"/>
<circle cx="16.5" cy="8.9" r="1.1" fill="#5cc45c"/><circle cx="16.5" cy="11.8" r="1" fill="#d6b040"/></svg>
<div class="r" style="left:139px;top:479px;width:155px;height:27px;overflow:hidden">
<div class="t " style="left:7.80px;top:7.21px;font-size:13.333px;line-height:13.333px;color:#303030;letter-spacing:0.817px;">Empresa Teste</div>
</div>
<div class="t " style="left:302.80px;top:486.21px;font-size:13.333px;line-height:13.333px;color:#303030;letter-spacing:0.514px;">São Paulo</div>
<div class="t " style="left:477.80px;top:486.21px;font-size:13.333px;line-height:13.333px;color:#303030;letter-spacing:-0.313px;">SP</div>
<div class="t " style="left:553.85px;top:486.21px;font-size:13.333px;line-height:13.333px;color:#303030;letter-spacing:1.083px;">999.999.999,99</div>
<div class="t " style="left:786.89px;top:486.21px;font-size:13.333px;line-height:13.333px;color:#303030;letter-spacing:1.086px;">0,00</div>
<div class="t " style="left:865.85px;top:486.21px;font-size:13.333px;line-height:13.333px;color:#303030;letter-spacing:1.083px;">999.999.999,99</div>
<div class="t " style="left:1099.89px;top:486.21px;font-size:13.333px;line-height:13.333px;color:#303030;letter-spacing:1.086px;">0,00</div>
<div class="r" style="left:8px;top:506px;width:1467px;height:27px;background:#eff0f2"></div>
<div class="r" style="left:22px;top:511px;width:12.5px;height:12.5px;background:#fff;border:1.3px solid #6f6f6f;border-radius:3px"></div>
<svg class="r" style="left:60px;top:514.5px;" width="10" height="10" viewBox="0 0 10 10"><path d="M2.1 2.7 L7.5 7.5 M7.5 2.7 L2.1 7.5" stroke="#c92424" stroke-width="2.5" stroke-linecap="round"/></svg>
<svg class="r" style="left:75px;top:508px;" width="22" height="22" viewBox="0 0 22 22"><path d="M3.87 13.03 L16.64 1.32 L18.16 2.98 L5.39 14.69 Z" fill="#f4b25c"/>
<path d="M5.39 14.69 L18.16 2.98 L19.68 4.63 L6.91 16.35 Z" fill="#ea9330"/>
<path d="M3.87 13.03 L6.91 16.35 L2.00 17.80 Z" fill="#f6dcb2"/>
<path d="M2 17.8 L2.8 16.0 L3.9 17.1 Z" fill="#333"/></svg>
<svg class="r" style="left:112px;top:509px;" width="20" height="20" viewBox="0 0 20 20"><defs><linearGradient id="pg" x1="0" y1="0" x2="0" y2="1"><stop offset="0" stop-color="#f8f8f8"/><stop offset="0.45" stop-color="#dedede"/><stop offset="0.8" stop-color="#999"/><stop offset="1" stop-color="#b8b8b8"/></linearGradient></defs>
<rect x="4.9" y="0.4" width="10.1" height="6" rx="1" fill="#ececec" stroke="#cfcfcf" stroke-width="0.8"/>
<rect x="0.7" y="5" width="18.2" height="12" rx="3" fill="url(#pg)"/>
<rect x="5.1" y="14" width="9.6" height="5" rx="1" fill="#e2e2e2" stroke="#c4c4c4" stroke-width="0.8"/>
<circle cx="16.5" cy="8.9" r="1.1" fill="#5cc45c"/><circle cx="16.5" cy="11.8" r="1" fill="#d6b040"/></svg>
<div class="r" style="left:139px;top:506px;width:155px;height:27px;overflow:hidden">
<div class="t " style="left:7.80px;top:7.21px;font-size:13.333px;line-height:13.333px;color:#303030;letter-spacing:0.579px;">LimpaJá</div>
</div>
<div class="t " style="left:302.80px;top:513.21px;font-size:13.333px;line-height:13.333px;color:#303030;letter-spacing:0.763px;">Porto Alegre</div>
<div class="t " style="left:477.80px;top:513.21px;font-size:13.333px;line-height:13.333px;color:#303030;letter-spacing:-0.068px;">RS</div>
<div class="t " style="left:553.85px;top:513.21px;font-size:13.333px;line-height:13.333px;color:#303030;letter-spacing:1.083px;">999.999.999,99</div>
<div class="t " style="left:786.89px;top:513.21px;font-size:13.333px;line-height:13.333px;color:#303030;letter-spacing:1.086px;">0,00</div>
<div class="t " style="left:865.85px;top:513.21px;font-size:13.333px;line-height:13.333px;color:#303030;letter-spacing:1.083px;">999.999.999,99</div>
<div class="t " style="left:1099.89px;top:513.21px;font-size:13.333px;line-height:13.333px;color:#303030;letter-spacing:1.086px;">0,00</div>
<div class="r" style="left:8px;top:533px;width:1467px;height:26px;background:#ffffff"></div>
<div class="r" style="left:22px;top:538px;width:12.5px;height:12.5px;background:#fff;border:1.3px solid #6f6f6f;border-radius:3px"></div>
<svg class="r" style="left:60px;top:541.5px;" width="10" height="10" viewBox="0 0 10 10"><path d="M2.1 2.7 L7.5 7.5 M7.5 2.7 L2.1 7.5" stroke="#c92424" stroke-width="2.5" stroke-linecap="round"/></svg>
<svg class="r" style="left:75px;top:535px;" width="22" height="22" viewBox="0 0 22 22"><path d="M3.87 13.03 L16.64 1.32 L18.16 2.98 L5.39 14.69 Z" fill="#f4b25c"/>
<path d="M5.39 14.69 L18.16 2.98 L19.68 4.63 L6.91 16.35 Z" fill="#ea9330"/>
<path d="M3.87 13.03 L6.91 16.35 L2.00 17.80 Z" fill="#f6dcb2"/>
<path d="M2 17.8 L2.8 16.0 L3.9 17.1 Z" fill="#333"/></svg>
<svg class="r" style="left:112px;top:536px;" width="20" height="20" viewBox="0 0 20 20"><defs><linearGradient id="pg" x1="0" y1="0" x2="0" y2="1"><stop offset="0" stop-color="#f8f8f8"/><stop offset="0.45" stop-color="#dedede"/><stop offset="0.8" stop-color="#999"/><stop offset="1" stop-color="#b8b8b8"/></linearGradient></defs>
<rect x="4.9" y="0.4" width="10.1" height="6" rx="1" fill="#ececec" stroke="#cfcfcf" stroke-width="0.8"/>
<rect x="0.7" y="5" width="18.2" height="12" rx="3" fill="url(#pg)"/>
<rect x="5.1" y="14" width="9.6" height="5" rx="1" fill="#e2e2e2" stroke="#c4c4c4" stroke-width="0.8"/>
<circle cx="16.5" cy="8.9" r="1.1" fill="#5cc45c"/><circle cx="16.5" cy="11.8" r="1" fill="#d6b040"/></svg>
<div class="r" style="left:139px;top:533px;width:155px;height:26px;overflow:hidden">
<div class="t " style="left:7.80px;top:7.21px;font-size:13.333px;line-height:13.333px;color:#303030;letter-spacing:0.781px;">Momento Fotos</div>
</div>
<div class="t " style="left:302.80px;top:540.21px;font-size:13.333px;line-height:13.333px;color:#303030;letter-spacing:0.544px;">Esteio</div>
<div class="t " style="left:477.80px;top:540.21px;font-size:13.333px;line-height:13.333px;color:#303030;letter-spacing:-0.068px;">RS</div>
<div class="t " style="left:553.85px;top:540.21px;font-size:13.333px;line-height:13.333px;color:#303030;letter-spacing:1.083px;">999.999.999,99</div>
<div class="t " style="left:786.89px;top:540.21px;font-size:13.333px;line-height:13.333px;color:#303030;letter-spacing:1.086px;">0,00</div>
<div class="t " style="left:865.85px;top:540.21px;font-size:13.333px;line-height:13.333px;color:#303030;letter-spacing:1.083px;">999.999.999,99</div>
<div class="t " style="left:1099.89px;top:540.21px;font-size:13.333px;line-height:13.333px;color:#303030;letter-spacing:1.086px;">0,00</div>
<div class="r" style="left:8px;top:559px;width:1467px;height:27px;background:#eff0f2"></div>
<div class="r" style="left:22px;top:564px;width:12.5px;height:12.5px;background:#fff;border:1.3px solid #6f6f6f;border-radius:3px"></div>
<svg class="r" style="left:60px;top:567.5px;" width="10" height="10" viewBox="0 0 10 10"><path d="M2.1 2.7 L7.5 7.5 M7.5 2.7 L2.1 7.5" stroke="#c92424" stroke-width="2.5" stroke-linecap="round"/></svg>
<svg class="r" style="left:75px;top:561px;" width="22" height="22" viewBox="0 0 22 22"><path d="M3.87 13.03 L16.64 1.32 L18.16 2.98 L5.39 14.69 Z" fill="#f4b25c"/>
<path d="M5.39 14.69 L18.16 2.98 L19.68 4.63 L6.91 16.35 Z" fill="#ea9330"/>
<path d="M3.87 13.03 L6.91 16.35 L2.00 17.80 Z" fill="#f6dcb2"/>
<path d="M2 17.8 L2.8 16.0 L3.9 17.1 Z" fill="#333"/></svg>
<svg class="r" style="left:112px;top:562px;" width="20" height="20" viewBox="0 0 20 20"><defs><linearGradient id="pg" x1="0" y1="0" x2="0" y2="1"><stop offset="0" stop-color="#f8f8f8"/><stop offset="0.45" stop-color="#dedede"/><stop offset="0.8" stop-color="#999"/><stop offset="1" stop-color="#b8b8b8"/></linearGradient></defs>
<rect x="4.9" y="0.4" width="10.1" height="6" rx="1" fill="#ececec" stroke="#cfcfcf" stroke-width="0.8"/>
<rect x="0.7" y="5" width="18.2" height="12" rx="3" fill="url(#pg)"/>
<rect x="5.1" y="14" width="9.6" height="5" rx="1" fill="#e2e2e2" stroke="#c4c4c4" stroke-width="0.8"/>
<circle cx="16.5" cy="8.9" r="1.1" fill="#5cc45c"/><circle cx="16.5" cy="11.8" r="1" fill="#d6b040"/></svg>
<div class="r" style="left:139px;top:559px;width:155px;height:27px;overflow:hidden">
<div class="t " style="left:7.80px;top:7.21px;font-size:13.333px;line-height:13.333px;color:#303030;letter-spacing:0.489px;">MXP AnaB Festas</div>
</div>
<div class="t " style="left:302.80px;top:566.21px;font-size:13.333px;line-height:13.333px;color:#303030;letter-spacing:0.763px;">Porto Alegre</div>
<div class="t " style="left:477.80px;top:566.21px;font-size:13.333px;line-height:13.333px;color:#303030;letter-spacing:-0.068px;">RS</div>
<div class="t " style="left:631.39px;top:566.21px;font-size:13.333px;line-height:13.333px;color:#303030;letter-spacing:1.086px;">0,00</div>
<div class="t " style="left:786.89px;top:566.21px;font-size:13.333px;line-height:13.333px;color:#303030;letter-spacing:1.086px;">0,00</div>
<div class="t " style="left:943.39px;top:566.21px;font-size:13.333px;line-height:13.333px;color:#303030;letter-spacing:1.086px;">0,00</div>
<div class="t " style="left:1099.89px;top:566.21px;font-size:13.333px;line-height:13.333px;color:#303030;letter-spacing:1.086px;">0,00</div>
<div class="r" style="left:8px;top:586px;width:1467px;height:27px;background:#ffffff"></div>
<div class="r" style="left:22px;top:591px;width:12.5px;height:12.5px;background:#fff;border:1.3px solid #6f6f6f;border-radius:3px"></div>
<svg class="r" style="left:60px;top:594.5px;" width="10" height="10" viewBox="0 0 10 10"><path d="M2.1 2.7 L7.5 7.5 M7.5 2.7 L2.1 7.5" stroke="#c92424" stroke-width="2.5" stroke-linecap="round"/></svg>
<svg class="r" style="left:75px;top:588px;" width="22" height="22" viewBox="0 0 22 22"><path d="M3.87 13.03 L16.64 1.32 L18.16 2.98 L5.39 14.69 Z" fill="#f4b25c"/>
<path d="M5.39 14.69 L18.16 2.98 L19.68 4.63 L6.91 16.35 Z" fill="#ea9330"/>
<path d="M3.87 13.03 L6.91 16.35 L2.00 17.80 Z" fill="#f6dcb2"/>
<path d="M2 17.8 L2.8 16.0 L3.9 17.1 Z" fill="#333"/></svg>
<svg class="r" style="left:112px;top:589px;" width="20" height="20" viewBox="0 0 20 20"><defs><linearGradient id="pg" x1="0" y1="0" x2="0" y2="1"><stop offset="0" stop-color="#f8f8f8"/><stop offset="0.45" stop-color="#dedede"/><stop offset="0.8" stop-color="#999"/><stop offset="1" stop-color="#b8b8b8"/></linearGradient></defs>
<rect x="4.9" y="0.4" width="10.1" height="6" rx="1" fill="#ececec" stroke="#cfcfcf" stroke-width="0.8"/>
<rect x="0.7" y="5" width="18.2" height="12" rx="3" fill="url(#pg)"/>
<rect x="5.1" y="14" width="9.6" height="5" rx="1" fill="#e2e2e2" stroke="#c4c4c4" stroke-width="0.8"/>
<circle cx="16.5" cy="8.9" r="1.1" fill="#5cc45c"/><circle cx="16.5" cy="11.8" r="1" fill="#d6b040"/></svg>
<div class="r" style="left:139px;top:586px;width:155px;height:27px;overflow:hidden">
<div class="t " style="left:7.80px;top:7.21px;font-size:13.333px;line-height:13.333px;color:#303030;letter-spacing:0.587px;">P&amp;G Pizzaria Delivery</div>
</div>
<div class="t " style="left:302.80px;top:593.21px;font-size:13.333px;line-height:13.333px;color:#303030;letter-spacing:0.763px;">Porto Alegre</div>
<div class="t " style="left:477.80px;top:593.21px;font-size:13.333px;line-height:13.333px;color:#303030;letter-spacing:-0.068px;">RS</div>
<div class="t " style="left:553.85px;top:593.21px;font-size:13.333px;line-height:13.333px;color:#303030;letter-spacing:1.083px;">999.999.999,99</div>
<div class="t " style="left:786.89px;top:593.21px;font-size:13.333px;line-height:13.333px;color:#303030;letter-spacing:1.086px;">0,00</div>
<div class="t " style="left:865.85px;top:593.21px;font-size:13.333px;line-height:13.333px;color:#303030;letter-spacing:1.083px;">999.999.999,99</div>
<div class="t " style="left:1099.89px;top:593.21px;font-size:13.333px;line-height:13.333px;color:#303030;letter-spacing:1.086px;">0,00</div>
<div class="r" style="left:8px;top:613px;width:1467px;height:26px;background:#eff0f2"></div>
<div class="r" style="left:22px;top:618px;width:12.5px;height:12.5px;background:#fff;border:1.3px solid #6f6f6f;border-radius:3px"></div>
<svg class="r" style="left:60px;top:621.5px;" width="10" height="10" viewBox="0 0 10 10"><path d="M2.1 2.7 L7.5 7.5 M7.5 2.7 L2.1 7.5" stroke="#c92424" stroke-width="2.5" stroke-linecap="round"/></svg>
<svg class="r" style="left:75px;top:615px;" width="22" height="22" viewBox="0 0 22 22"><path d="M3.87 13.03 L16.64 1.32 L18.16 2.98 L5.39 14.69 Z" fill="#f4b25c"/>
<path d="M5.39 14.69 L18.16 2.98 L19.68 4.63 L6.91 16.35 Z" fill="#ea9330"/>
<path d="M3.87 13.03 L6.91 16.35 L2.00 17.80 Z" fill="#f6dcb2"/>
<path d="M2 17.8 L2.8 16.0 L3.9 17.1 Z" fill="#333"/></svg>
<svg class="r" style="left:112px;top:616px;" width="20" height="20" viewBox="0 0 20 20"><defs><linearGradient id="pg" x1="0" y1="0" x2="0" y2="1"><stop offset="0" stop-color="#f8f8f8"/><stop offset="0.45" stop-color="#dedede"/><stop offset="0.8" stop-color="#999"/><stop offset="1" stop-color="#b8b8b8"/></linearGradient></defs>
<rect x="4.9" y="0.4" width="10.1" height="6" rx="1" fill="#ececec" stroke="#cfcfcf" stroke-width="0.8"/>
<rect x="0.7" y="5" width="18.2" height="12" rx="3" fill="url(#pg)"/>
<rect x="5.1" y="14" width="9.6" height="5" rx="1" fill="#e2e2e2" stroke="#c4c4c4" stroke-width="0.8"/>
<circle cx="16.5" cy="8.9" r="1.1" fill="#5cc45c"/><circle cx="16.5" cy="11.8" r="1" fill="#d6b040"/></svg>
<div class="r" style="left:139px;top:613px;width:155px;height:26px;overflow:hidden">
<div class="t " style="left:7.80px;top:7.21px;font-size:13.333px;line-height:13.333px;color:#303030;letter-spacing:0.523px;">Padoka</div>
</div>
<div class="t " style="left:302.80px;top:620.21px;font-size:13.333px;line-height:13.333px;color:#303030;letter-spacing:0.658px;">Caxias do Sul</div>
<div class="t " style="left:477.80px;top:620.21px;font-size:13.333px;line-height:13.333px;color:#303030;letter-spacing:-0.068px;">RS</div>
<div class="t " style="left:553.85px;top:620.21px;font-size:13.333px;line-height:13.333px;color:#303030;letter-spacing:1.083px;">999.999.999,99</div>
<div class="t " style="left:778.41px;top:620.21px;font-size:13.333px;line-height:13.333px;color:#303030;letter-spacing:1.081px;">72,00</div>
<div class="t " style="left:865.85px;top:620.21px;font-size:13.333px;line-height:13.333px;color:#303030;letter-spacing:1.083px;">999.999.927,99</div>
<div class="t " style="left:1091.41px;top:620.21px;font-size:13.333px;line-height:13.333px;color:#303030;letter-spacing:1.081px;">72,00</div>
<div class="t " style="left:1146.90px;top:620.21px;font-size:13.333px;line-height:13.333px;color:#303030;letter-spacing:1.386px;">10/03/25</div>
<div class="t " style="left:1315.50px;top:620.21px;font-size:13.333px;line-height:13.333px;color:#303030;letter-spacing:1.386px;">13/03/25</div>
<div class="r" style="left:8px;top:639px;width:1467px;height:27px;background:#ffffff"></div>
<div class="r" style="left:22px;top:644px;width:12.5px;height:12.5px;background:#fff;border:1.3px solid #6f6f6f;border-radius:3px"></div>
<svg class="r" style="left:60px;top:647.5px;" width="10" height="10" viewBox="0 0 10 10"><path d="M2.1 2.7 L7.5 7.5 M7.5 2.7 L2.1 7.5" stroke="#c92424" stroke-width="2.5" stroke-linecap="round"/></svg>
<svg class="r" style="left:75px;top:641px;" width="22" height="22" viewBox="0 0 22 22"><path d="M3.87 13.03 L16.64 1.32 L18.16 2.98 L5.39 14.69 Z" fill="#f4b25c"/>
<path d="M5.39 14.69 L18.16 2.98 L19.68 4.63 L6.91 16.35 Z" fill="#ea9330"/>
<path d="M3.87 13.03 L6.91 16.35 L2.00 17.80 Z" fill="#f6dcb2"/>
<path d="M2 17.8 L2.8 16.0 L3.9 17.1 Z" fill="#333"/></svg>
<svg class="r" style="left:112px;top:642px;" width="20" height="20" viewBox="0 0 20 20"><defs><linearGradient id="pg" x1="0" y1="0" x2="0" y2="1"><stop offset="0" stop-color="#f8f8f8"/><stop offset="0.45" stop-color="#dedede"/><stop offset="0.8" stop-color="#999"/><stop offset="1" stop-color="#b8b8b8"/></linearGradient></defs>
<rect x="4.9" y="0.4" width="10.1" height="6" rx="1" fill="#ececec" stroke="#cfcfcf" stroke-width="0.8"/>
<rect x="0.7" y="5" width="18.2" height="12" rx="3" fill="url(#pg)"/>
<rect x="5.1" y="14" width="9.6" height="5" rx="1" fill="#e2e2e2" stroke="#c4c4c4" stroke-width="0.8"/>
<circle cx="16.5" cy="8.9" r="1.1" fill="#5cc45c"/><circle cx="16.5" cy="11.8" r="1" fill="#d6b040"/></svg>
<div class="r" style="left:139px;top:639px;width:155px;height:27px;overflow:hidden">
<div class="t " style="left:7.80px;top:7.21px;font-size:13.333px;line-height:13.333px;color:#303030;letter-spacing:0.484px;">Paulo Lucca</div>
</div>
<div class="t " style="left:302.80px;top:646.21px;font-size:13.333px;line-height:13.333px;color:#303030;letter-spacing:0.626px;">Rio Grande</div>
<div class="t " style="left:477.80px;top:646.21px;font-size:13.333px;line-height:13.333px;color:#303030;letter-spacing:-0.068px;">RS</div>
<div class="t " style="left:553.85px;top:646.21px;font-size:13.333px;line-height:13.333px;color:#303030;letter-spacing:1.083px;">999.999.999,99</div>
<div class="t " style="left:769.93px;top:646.21px;font-size:13.333px;line-height:13.333px;color:#303030;letter-spacing:1.079px;">236,50</div>
<div class="t " style="left:865.85px;top:646.21px;font-size:13.333px;line-height:13.333px;color:#303030;letter-spacing:1.083px;">999.999.763,49</div>
<div class="t " style="left:1082.93px;top:646.21px;font-size:13.333px;line-height:13.333px;color:#303030;letter-spacing:1.079px;">236,50</div>
<div class="t " style="left:1146.90px;top:646.21px;font-size:13.333px;line-height:13.333px;color:#303030;letter-spacing:1.386px;">07/03/25</div>
<div class="r" style="left:8px;top:666px;width:1467px;height:27px;background:#eff0f2"></div>
<div class="r" style="left:22px;top:671px;width:12.5px;height:12.5px;background:#fff;border:1.3px solid #6f6f6f;border-radius:3px"></div>
<svg class="r" style="left:60px;top:674.5px;" width="10" height="10" viewBox="0 0 10 10"><path d="M2.1 2.7 L7.5 7.5 M7.5 2.7 L2.1 7.5" stroke="#c92424" stroke-width="2.5" stroke-linecap="round"/></svg>
<svg class="r" style="left:75px;top:668px;" width="22" height="22" viewBox="0 0 22 22"><path d="M3.87 13.03 L16.64 1.32 L18.16 2.98 L5.39 14.69 Z" fill="#f4b25c"/>
<path d="M5.39 14.69 L18.16 2.98 L19.68 4.63 L6.91 16.35 Z" fill="#ea9330"/>
<path d="M3.87 13.03 L6.91 16.35 L2.00 17.80 Z" fill="#f6dcb2"/>
<path d="M2 17.8 L2.8 16.0 L3.9 17.1 Z" fill="#333"/></svg>
<svg class="r" style="left:112px;top:669px;" width="20" height="20" viewBox="0 0 20 20"><defs><linearGradient id="pg" x1="0" y1="0" x2="0" y2="1"><stop offset="0" stop-color="#f8f8f8"/><stop offset="0.45" stop-color="#dedede"/><stop offset="0.8" stop-color="#999"/><stop offset="1" stop-color="#b8b8b8"/></linearGradient></defs>
<rect x="4.9" y="0.4" width="10.1" height="6" rx="1" fill="#ececec" stroke="#cfcfcf" stroke-width="0.8"/>
<rect x="0.7" y="5" width="18.2" height="12" rx="3" fill="url(#pg)"/>
<rect x="5.1" y="14" width="9.6" height="5" rx="1" fill="#e2e2e2" stroke="#c4c4c4" stroke-width="0.8"/>
<circle cx="16.5" cy="8.9" r="1.1" fill="#5cc45c"/><circle cx="16.5" cy="11.8" r="1" fill="#d6b040"/></svg>
<div class="r" style="left:139px;top:666px;width:155px;height:27px;overflow:hidden">
<div class="t " style="left:7.80px;top:7.21px;font-size:13.333px;line-height:13.333px;color:#303030;letter-spacing:0.745px;">Sophia e Henry Gráfica</div>
</div>
<div class="t " style="left:302.80px;top:673.21px;font-size:13.333px;line-height:13.333px;color:#303030;letter-spacing:0.673px;">Cachoeirinha</div>
<div class="t " style="left:477.80px;top:673.21px;font-size:13.333px;line-height:13.333px;color:#303030;letter-spacing:-0.068px;">RS</div>
<div class="t " style="left:553.85px;top:673.21px;font-size:13.333px;line-height:13.333px;color:#303030;letter-spacing:1.083px;">999.999.999,99</div>
<div class="t " style="left:786.89px;top:673.21px;font-size:13.333px;line-height:13.333px;color:#303030;letter-spacing:1.086px;">0,00</div>
<div class="t " style="left:865.85px;top:673.21px;font-size:13.333px;line-height:13.333px;color:#303030;letter-spacing:1.083px;">999.999.999,99</div>
<div class="t " style="left:1099.89px;top:673.21px;font-size:13.333px;line-height:13.333px;color:#303030;letter-spacing:1.086px;">0,00</div>
<div class="r" style="left:8px;top:693px;width:1467px;height:26px;background:#ffffff"></div>
<div class="r" style="left:22px;top:698px;width:12.5px;height:12.5px;background:#fff;border:1.3px solid #6f6f6f;border-radius:3px"></div>
<svg class="r" style="left:60px;top:701.5px;" width="10" height="10" viewBox="0 0 10 10"><path d="M2.1 2.7 L7.5 7.5 M7.5 2.7 L2.1 7.5" stroke="#c92424" stroke-width="2.5" stroke-linecap="round"/></svg>
<svg class="r" style="left:75px;top:695px;" width="22" height="22" viewBox="0 0 22 22"><path d="M3.87 13.03 L16.64 1.32 L18.16 2.98 L5.39 14.69 Z" fill="#f4b25c"/>
<path d="M5.39 14.69 L18.16 2.98 L19.68 4.63 L6.91 16.35 Z" fill="#ea9330"/>
<path d="M3.87 13.03 L6.91 16.35 L2.00 17.80 Z" fill="#f6dcb2"/>
<path d="M2 17.8 L2.8 16.0 L3.9 17.1 Z" fill="#333"/></svg>
<svg class="r" style="left:112px;top:696px;" width="20" height="20" viewBox="0 0 20 20"><defs><linearGradient id="pg" x1="0" y1="0" x2="0" y2="1"><stop offset="0" stop-color="#f8f8f8"/><stop offset="0.45" stop-color="#dedede"/><stop offset="0.8" stop-color="#999"/><stop offset="1" stop-color="#b8b8b8"/></linearGradient></defs>
<rect x="4.9" y="0.4" width="10.1" height="6" rx="1" fill="#ececec" stroke="#cfcfcf" stroke-width="0.8"/>
<rect x="0.7" y="5" width="18.2" height="12" rx="3" fill="url(#pg)"/>
<rect x="5.1" y="14" width="9.6" height="5" rx="1" fill="#e2e2e2" stroke="#c4c4c4" stroke-width="0.8"/>
<circle cx="16.5" cy="8.9" r="1.1" fill="#5cc45c"/><circle cx="16.5" cy="11.8" r="1" fill="#d6b040"/></svg>
<div class="r" style="left:139px;top:693px;width:155px;height:26px;overflow:hidden">
<div class="t " style="left:7.80px;top:7.21px;font-size:13.333px;line-height:13.333px;color:#303030;letter-spacing:0.888px;">Tele Telecom</div>
</div>
<div class="t " style="left:302.80px;top:700.21px;font-size:13.333px;line-height:13.333px;color:#303030;letter-spacing:0.751px;">Santa Maria</div>
<div class="t " style="left:477.80px;top:700.21px;font-size:13.333px;line-height:13.333px;color:#303030;letter-spacing:-0.068px;">RS</div>
<div class="t " style="left:553.85px;top:700.21px;font-size:13.333px;line-height:13.333px;color:#303030;letter-spacing:1.083px;">999.999.999,99</div>
<div class="t " style="left:786.89px;top:700.21px;font-size:13.333px;line-height:13.333px;color:#303030;letter-spacing:1.086px;">0,00</div>
<div class="t " style="left:865.85px;top:700.21px;font-size:13.333px;line-height:13.333px;color:#303030;letter-spacing:1.083px;">999.999.999,99</div>
<div class="t " style="left:1099.89px;top:700.21px;font-size:13.333px;line-height:13.333px;color:#303030;letter-spacing:1.086px;">0,00</div>
<div class="t " style="left:1146.90px;top:700.21px;font-size:13.333px;line-height:13.333px;color:#303030;letter-spacing:1.386px;">07/03/25</div>
<div class="t " style="left:1315.50px;top:700.21px;font-size:13.333px;line-height:13.333px;color:#303030;letter-spacing:1.386px;">24/03/25</div>
<div class="r" style="left:8px;top:719px;width:1467px;height:27px;background:#eff0f2"></div>
<div class="r" style="left:22px;top:724px;width:12.5px;height:12.5px;background:#fff;border:1.3px solid #6f6f6f;border-radius:3px"></div>
<svg class="r" style="left:60px;top:727.5px;" width="10" height="10" viewBox="0 0 10 10"><path d="M2.1 2.7 L7.5 7.5 M7.5 2.7 L2.1 7.5" stroke="#c92424" stroke-width="2.5" stroke-linecap="round"/></svg>
<svg class="r" style="left:75px;top:721px;" width="22" height="22" viewBox="0 0 22 22"><path d="M3.87 13.03 L16.64 1.32 L18.16 2.98 L5.39 14.69 Z" fill="#f4b25c"/>
<path d="M5.39 14.69 L18.16 2.98 L19.68 4.63 L6.91 16.35 Z" fill="#ea9330"/>
<path d="M3.87 13.03 L6.91 16.35 L2.00 17.80 Z" fill="#f6dcb2"/>
<path d="M2 17.8 L2.8 16.0 L3.9 17.1 Z" fill="#333"/></svg>
<svg class="r" style="left:112px;top:722px;" width="20" height="20" viewBox="0 0 20 20"><defs><linearGradient id="pg" x1="0" y1="0" x2="0" y2="1"><stop offset="0" stop-color="#f8f8f8"/><stop offset="0.45" stop-color="#dedede"/><stop offset="0.8" stop-color="#999"/><stop offset="1" stop-color="#b8b8b8"/></linearGradient></defs>
<rect x="4.9" y="0.4" width="10.1" height="6" rx="1" fill="#ececec" stroke="#cfcfcf" stroke-width="0.8"/>
<rect x="0.7" y="5" width="18.2" height="12" rx="3" fill="url(#pg)"/>
<rect x="5.1" y="14" width="9.6" height="5" rx="1" fill="#e2e2e2" stroke="#c4c4c4" stroke-width="0.8"/>
<circle cx="16.5" cy="8.9" r="1.1" fill="#5cc45c"/><circle cx="16.5" cy="11.8" r="1" fill="#d6b040"/></svg>
<div class="r" style="left:139px;top:719px;width:155px;height:27px;overflow:hidden">
<div class="t " style="left:7.80px;top:7.21px;font-size:13.333px;line-height:13.333px;color:#303030;letter-spacing:0.580px;">Thales Costa</div>
</div>
<div class="t " style="left:302.80px;top:726.21px;font-size:13.333px;line-height:13.333px;color:#303030;letter-spacing:0.763px;">Porto Alegre</div>
<div class="t " style="left:477.80px;top:726.21px;font-size:13.333px;line-height:13.333px;color:#303030;letter-spacing:-0.068px;">RS</div>
<div class="t " style="left:592.62px;top:726.21px;font-size:13.333px;line-height:13.333px;color:#303030;letter-spacing:1.083px;">10.000,00</div>
<div class="t " style="left:786.89px;top:726.21px;font-size:13.333px;line-height:13.333px;color:#303030;letter-spacing:1.086px;">0,00</div>
<div class="t " style="left:904.62px;top:726.21px;font-size:13.333px;line-height:13.333px;color:#303030;letter-spacing:1.083px;">10.000,00</div>
<div class="t " style="left:1099.89px;top:726.21px;font-size:13.333px;line-height:13.333px;color:#303030;letter-spacing:1.086px;">0,00</div>
<div class="t " style="left:1315.50px;top:726.21px;font-size:13.333px;line-height:13.333px;color:#303030;letter-spacing:1.386px;">16/04/25</div>
<div class="r" style="left:8px;top:746px;width:1467px;height:27px;background:#ffffff"></div>
<div class="r" style="left:22px;top:751px;width:12.5px;height:12.5px;background:#fff;border:1.3px solid #6f6f6f;border-radius:3px"></div>
<svg class="r" style="left:60px;top:754.5px;" width="10" height="10" viewBox="0 0 10 10"><path d="M2.1 2.7 L7.5 7.5 M7.5 2.7 L2.1 7.5" stroke="#c92424" stroke-width="2.5" stroke-linecap="round"/></svg>
<svg class="r" style="left:75px;top:748px;" width="22" height="22" viewBox="0 0 22 22"><path d="M3.87 13.03 L16.64 1.32 L18.16 2.98 L5.39 14.69 Z" fill="#f4b25c"/>
<path d="M5.39 14.69 L18.16 2.98 L19.68 4.63 L6.91 16.35 Z" fill="#ea9330"/>
<path d="M3.87 13.03 L6.91 16.35 L2.00 17.80 Z" fill="#f6dcb2"/>
<path d="M2 17.8 L2.8 16.0 L3.9 17.1 Z" fill="#333"/></svg>
<svg class="r" style="left:112px;top:749px;" width="20" height="20" viewBox="0 0 20 20"><defs><linearGradient id="pg" x1="0" y1="0" x2="0" y2="1"><stop offset="0" stop-color="#f8f8f8"/><stop offset="0.45" stop-color="#dedede"/><stop offset="0.8" stop-color="#999"/><stop offset="1" stop-color="#b8b8b8"/></linearGradient></defs>
<rect x="4.9" y="0.4" width="10.1" height="6" rx="1" fill="#ececec" stroke="#cfcfcf" stroke-width="0.8"/>
<rect x="0.7" y="5" width="18.2" height="12" rx="3" fill="url(#pg)"/>
<rect x="5.1" y="14" width="9.6" height="5" rx="1" fill="#e2e2e2" stroke="#c4c4c4" stroke-width="0.8"/>
<circle cx="16.5" cy="8.9" r="1.1" fill="#5cc45c"/><circle cx="16.5" cy="11.8" r="1" fill="#d6b040"/></svg>
<div class="r" style="left:139px;top:746px;width:155px;height:27px;overflow:hidden">
<div class="t " style="left:7.80px;top:7.21px;font-size:13.333px;line-height:13.333px;color:#303030;letter-spacing:0.697px;">Vidros CeA Ltda</div>
</div>
<div class="t " style="left:302.80px;top:753.21px;font-size:13.333px;line-height:13.333px;color:#303030;letter-spacing:0.885px;">Novo Hamburgo</div>
<div class="t " style="left:477.80px;top:753.21px;font-size:13.333px;line-height:13.333px;color:#303030;letter-spacing:-0.068px;">RS</div>
<div class="t " style="left:553.85px;top:753.21px;font-size:13.333px;line-height:13.333px;color:#303030;letter-spacing:1.083px;">999.999.999,99</div>
<div class="t " style="left:786.89px;top:753.21px;font-size:13.333px;line-height:13.333px;color:#303030;letter-spacing:1.086px;">0,00</div>
<div class="t " style="left:865.85px;top:753.21px;font-size:13.333px;line-height:13.333px;color:#303030;letter-spacing:1.083px;">999.999.999,99</div>
<div class="t " style="left:1099.89px;top:753.21px;font-size:13.333px;line-height:13.333px;color:#303030;letter-spacing:1.086px;">0,00</div>
<div class="r" style="left:55px;top:266px;width:1px;height:507px;background:#d6d8dc"></div>
<div class="r" style="left:103px;top:266px;width:1px;height:507px;background:#d6d8dc"></div>
<div class="r" style="left:138px;top:266px;width:1px;height:507px;background:#d6d8dc"></div>
<div class="r" style="left:294px;top:266px;width:1px;height:507px;background:#d6d8dc"></div>
<div class="r" style="left:469px;top:266px;width:1px;height:507px;background:#d6d8dc"></div>
<div class="r" style="left:513px;top:266px;width:1px;height:507px;background:#d6d8dc"></div>
<div class="r" style="left:669px;top:266px;width:1px;height:507px;background:#d6d8dc"></div>
<div class="r" style="left:825px;top:266px;width:1px;height:507px;background:#d6d8dc"></div>
<div class="r" style="left:981px;top:266px;width:1px;height:507px;background:#d6d8dc"></div>
<div class="r" style="left:1138px;top:266px;width:1px;height:507px;background:#d6d8dc"></div>
<div class="r" style="left:1306px;top:266px;width:1px;height:507px;background:#d6d8dc"></div>
<div class="r" style="left:8px;top:880px;width:1905px;height:26px;background:#eff0f2;border-top:1px solid #a9b0b8"></div>
<div class="r" style="left:8px;top:881px;width:1467px;height:26px;background:#c1c1c1"></div>
<div class="r" style="left:55px;top:881px;width:1px;height:26px;background:#e6e7ea"></div>
<div class="r" style="left:103px;top:881px;width:1px;height:26px;background:#e6e7ea"></div>
<div class="r" style="left:138px;top:881px;width:1px;height:26px;background:#e6e7ea"></div>
<div class="r" style="left:294px;top:881px;width:1px;height:26px;background:#e6e7ea"></div>
<div class="r" style="left:469px;top:881px;width:1px;height:26px;background:#e6e7ea"></div>
<div class="r" style="left:513px;top:881px;width:1px;height:26px;background:#e6e7ea"></div>
<div class="r" style="left:669px;top:881px;width:1px;height:26px;background:#e6e7ea"></div>
<div class="r" style="left:825px;top:881px;width:1px;height:26px;background:#e6e7ea"></div>
<div class="r" style="left:981px;top:881px;width:1px;height:26px;background:#e6e7ea"></div>
<div class="r" style="left:1138px;top:881px;width:1px;height:26px;background:#e6e7ea"></div>
<div class="r" style="left:1306px;top:881px;width:1px;height:26px;background:#e6e7ea"></div>
<div class="r" style="left:1894px;top:881px;width:1px;height:26px;background:#a9b0b8"></div>
<div class="t " style="left:15.20px;top:887.91px;font-size:13.333px;line-height:13.333px;color:#333;letter-spacing:1.099px;">Totais:</div>
<div class="t " style="left:532.03px;top:887.91px;font-size:13.333px;line-height:13.333px;color:#333;letter-spacing:1.084px;">17.000.009.999,83</div>
<div class="t " style="left:756.60px;top:887.91px;font-size:13.333px;line-height:13.333px;color:#333;letter-spacing:1.086px;">2.098,50</div>
<div class="t " style="left:852.52px;top:887.91px;font-size:13.333px;line-height:13.333px;color:#333;letter-spacing:1.086px;">4.999.997.901,45</div>
<div class="t " style="left:1082.93px;top:887.91px;font-size:13.333px;line-height:13.333px;color:#333;letter-spacing:1.079px;">913,50</div>
<div class="r" style="left:222px;top:87px;width:41px;height:29px;border:5px solid #e61b1b;z-index:5"></div>
</body></html>
